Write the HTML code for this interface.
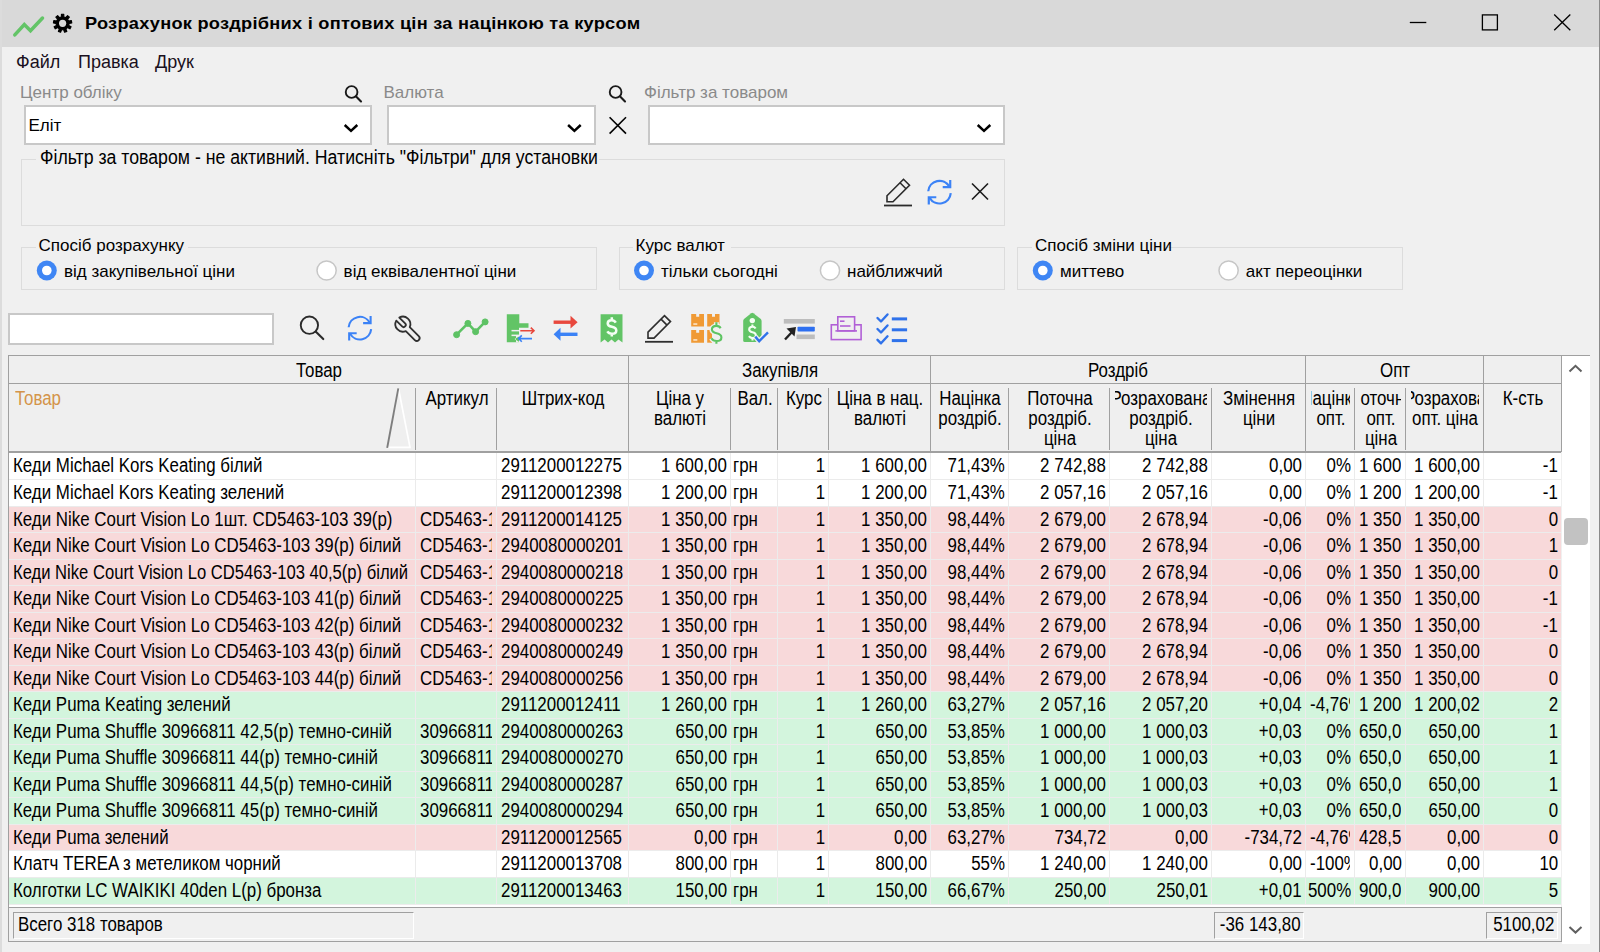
<!DOCTYPE html>
<html><head><meta charset="utf-8"><style>
*{margin:0;padding:0;box-sizing:border-box}
html,body{width:1600px;height:952px;overflow:hidden;background:#f0f0f0;font-family:"Liberation Sans",sans-serif;position:relative}
.a{position:absolute}
.t{position:absolute;white-space:pre}
svg{position:absolute;overflow:visible}
</style></head>
<body>
<div class="a" style="left:0px;top:0px;width:1600px;height:47px;background:#d9d9d9"></div>
<svg style="left:0;top:0" width="80" height="46"><polyline points="14.8,34.9 24.3,24.6 30.5,30.8 42.5,18" fill="none" stroke="#63c467" stroke-width="3.5" stroke-linecap="round" stroke-linejoin="miter"/></svg>
<svg style="left:0;top:0" width="80" height="46"><path d="M61.37,16.92 L61.41,14.18 L63.79,14.18 L63.83,16.92 L65.76,17.62 L67.55,15.55 L69.38,17.08 L67.64,19.20 L68.67,20.98 L71.38,20.54 L71.79,22.89 L69.10,23.40 L68.74,25.43 L71.10,26.83 L69.90,28.89 L67.51,27.55 L65.94,28.88 L66.84,31.46 L64.60,32.28 L63.63,29.72 L61.57,29.72 L60.60,32.28 L58.36,31.46 L59.26,28.88 L57.69,27.55 L55.30,28.89 L54.10,26.83 L56.46,25.43 L56.10,23.40 L53.41,22.89 L53.82,20.54 L56.53,20.98 L57.56,19.20 L55.82,17.08 L57.65,15.55 L59.44,17.62 Z" fill="#000" stroke="#000" stroke-width="1.1" stroke-linejoin="round"/><circle cx="62.6" cy="23.3" r="3.6" fill="#d9d9d9"/></svg>
<div class="t" style="left:84.5px;top:15.11px;font-size:17px;line-height:17px;color:#000;font-weight:bold;letter-spacing:0.25px;transform:scaleX(1.07);transform-origin:0 50%">Розрахунок роздрібних і оптових цін за націнкою та курсом</div>
<svg style="left:1400px;top:0" width="200" height="46"><line x1="9.8" y1="22.5" x2="26.3" y2="22.5" stroke="#000" stroke-width="1.3"/><rect x="82.4" y="14.9" width="15" height="15" fill="none" stroke="#000" stroke-width="1.3"/><line x1="154.2" y1="14.5" x2="170.3" y2="30.2" stroke="#000" stroke-width="1.3"/><line x1="170.3" y1="14.5" x2="154.2" y2="30.2" stroke="#000" stroke-width="1.3"/></svg>
<div class="t" style="left:16px;top:52.76px;font-size:18px;line-height:18px;color:#1a1020;">Файл</div>
<div class="t" style="left:78px;top:52.76px;font-size:18px;line-height:18px;color:#1a1020;">Правка</div>
<div class="t" style="left:155px;top:52.76px;font-size:18px;line-height:18px;color:#1a1020;">Друк</div>
<div class="t" style="left:20px;top:84.11px;font-size:17px;line-height:17px;color:#8a8a8a;">Центр обліку</div>
<div class="t" style="left:383.5px;top:84.11px;font-size:17px;line-height:17px;color:#8a8a8a;">Валюта</div>
<div class="t" style="left:644px;top:84.11px;font-size:17px;line-height:17px;color:#8a8a8a;">Фільтр за товаром</div>
<svg style="left:0;top:0" width="1" height="1"><circle cx="351.6" cy="92" r="5.85" fill="none" stroke="#1a1a1a" stroke-width="1.9"/><line x1="356.10828000000004" y1="96.50828" x2="361.00443000000007" y2="101.40442999999999" stroke="#1a1a1a" stroke-width="2.1" stroke-linecap="round"/></svg>
<svg style="left:0;top:0" width="1" height="1"><circle cx="615.6" cy="92" r="5.85" fill="none" stroke="#1a1a1a" stroke-width="1.9"/><line x1="620.10828" y1="96.50828" x2="625.00443" y2="101.40442999999999" stroke="#1a1a1a" stroke-width="2.1" stroke-linecap="round"/></svg>
<div class="a" style="left:24px;top:105px;width:348px;height:40px;background:#fff;border:2px solid #c8c8c8"></div>
<svg style="left:0;top:0" width="1" height="1"><polyline points="344.7,125 351,130.9 357.3,125" fill="none" stroke="#000" stroke-width="2.5"/></svg>
<div class="t" style="left:28.5px;top:116.61px;font-size:17px;line-height:17px;color:#000;">Еліт</div>
<div class="a" style="left:387px;top:105px;width:209px;height:40px;background:#fff;border:2px solid #c8c8c8"></div>
<svg style="left:0;top:0" width="1" height="1"><polyline points="568.1,125 574.4,130.9 580.6999999999999,125" fill="none" stroke="#000" stroke-width="2.5"/></svg>
<div class="a" style="left:648px;top:105px;width:357px;height:40px;background:#fff;border:2px solid #c8c8c8"></div>
<svg style="left:0;top:0" width="1" height="1"><polyline points="977.7,125 984,130.9 990.3,125" fill="none" stroke="#000" stroke-width="2.5"/></svg>
<svg style="left:0;top:0" width="1" height="1"><line x1="609.6" y1="117.2" x2="626" y2="133.6" stroke="#000" stroke-width="1.6"/><line x1="626" y1="117.2" x2="609.6" y2="133.6" stroke="#000" stroke-width="1.6"/></svg>
<div class="a" style="left:20.5px;top:158.5px;width:984.5px;height:67px;border:1px solid #dcdcdc"></div>
<div class="a" style="left:36px;top:150px;width:563px;height:14px;background:#f0f0f0"></div>
<div class="t" style="left:40px;width:600px;top:144.07px;height:27px;overflow:hidden"><div class="t" style="left:0;top:3px;font-size:20px;line-height:20px;color:#000;transform:scaleX(0.885);transform-origin:0 50%">Фільтр за товаром - не активний. Натисніть &quot;Фільтри&quot; для установки</div></div>
<svg style="left:0;top:0" width="1" height="1"><g transform="translate(884,204.3) scale(1.0)" fill="none" stroke="#2b2b2b" stroke-width="1.6" stroke-linejoin="miter"><path d="M3,-2.5 L3,-8.5 L19.5,-25 L25.5,-19 L9,-2.5 Z"/><line x1="16" y1="-21.5" x2="22" y2="-15.5"/><line x1="0" y1="1.2" x2="28" y2="1.2" stroke-width="1.8"/></g></svg>
<svg style="left:0;top:0" width="1" height="1"><g fill="none" stroke="#3b82f6" stroke-width="2.2"><path d="M928.24,191.22 A11.3,11.3 0 0 1 949.29,186.55"/><path d="M950.76,193.18 A11.3,11.3 0 0 1 929.71,197.85"/><path d="M942.71,187.13 L950.21,187.13 L950.21,179.93"/><path d="M936.29,197.27 L928.79,197.27 L928.79,204.47"/></g></svg>
<svg style="left:0;top:0" width="1" height="1"><line x1="972" y1="183.5" x2="988" y2="199.5" stroke="#1a1a1a" stroke-width="1.6"/><line x1="988" y1="183.5" x2="972" y2="199.5" stroke="#1a1a1a" stroke-width="1.6"/></svg>
<div class="a" style="left:21px;top:246.5px;width:575.5px;height:43.5px;border:1px solid #dcdcdc"></div>
<div class="a" style="left:35.5px;top:238.5px;width:152px;height:14px;background:#f0f0f0"></div>
<div class="t" style="left:38.5px;top:237.36px;font-size:17px;line-height:17px;color:#000;">Спосіб розрахунку</div>
<svg style="left:0;top:0" width="1" height="1"><circle cx="46.8" cy="270.5" r="10" fill="#3f86f4"/><circle cx="46.8" cy="270.5" r="4.8" fill="#fff"/></svg>
<div class="t" style="left:64px;top:262.91px;font-size:17px;line-height:17px;color:#000;">від закупівельної ціни</div>
<svg style="left:0;top:0" width="1" height="1"><circle cx="326.6" cy="270.5" r="9.6" fill="#fff" stroke="#c6c6c6" stroke-width="1.5"/></svg>
<div class="t" style="left:343.6px;top:262.91px;font-size:17px;line-height:17px;color:#000;">від еквівалентної ціни</div>
<div class="a" style="left:618.5px;top:246.5px;width:386.5px;height:43.5px;border:1px solid #dcdcdc"></div>
<div class="a" style="left:632.6px;top:238.5px;width:98px;height:14px;background:#f0f0f0"></div>
<div class="t" style="left:635.6px;top:237.36px;font-size:17px;line-height:17px;color:#000;">Курс валют</div>
<svg style="left:0;top:0" width="1" height="1"><circle cx="644" cy="270.5" r="10" fill="#3f86f4"/><circle cx="644" cy="270.5" r="4.8" fill="#fff"/></svg>
<div class="t" style="left:661px;top:262.91px;font-size:17px;line-height:17px;color:#000;">тільки сьогодні</div>
<svg style="left:0;top:0" width="1" height="1"><circle cx="830" cy="270.5" r="9.6" fill="#fff" stroke="#c6c6c6" stroke-width="1.5"/></svg>
<div class="t" style="left:847px;top:262.91px;font-size:17px;line-height:17px;color:#000;">найближчий</div>
<div class="a" style="left:1017.3px;top:246.5px;width:386.2px;height:43.5px;border:1px solid #dcdcdc"></div>
<div class="a" style="left:1032px;top:238.5px;width:135px;height:14px;background:#f0f0f0"></div>
<div class="t" style="left:1035px;top:237.36px;font-size:17px;line-height:17px;color:#000;">Спосіб зміни ціни</div>
<svg style="left:0;top:0" width="1" height="1"><circle cx="1042.8" cy="270.5" r="10" fill="#3f86f4"/><circle cx="1042.8" cy="270.5" r="4.8" fill="#fff"/></svg>
<div class="t" style="left:1060px;top:262.91px;font-size:17px;line-height:17px;color:#000;">миттево</div>
<svg style="left:0;top:0" width="1" height="1"><circle cx="1228.6" cy="270.5" r="9.6" fill="#fff" stroke="#c6c6c6" stroke-width="1.5"/></svg>
<div class="t" style="left:1245.8px;top:262.91px;font-size:17px;line-height:17px;color:#000;">акт переоцінки</div>
<div class="a" style="left:8px;top:313px;width:266px;height:32px;background:#fff;border:2px solid #c8c8c8"></div>
<svg style="left:0;top:0" width="1" height="1"><circle cx="309.4" cy="325.2" r="8.65" fill="none" stroke="#2a2a2a" stroke-width="1.9"/><line x1="315.88815999999997" y1="331.68816" x2="323.25916" y2="339.05916" stroke="#2a2a2a" stroke-width="2.1" stroke-linecap="round"/></svg>
<svg style="left:0;top:0" width="1" height="1"><g fill="none" stroke="#3b82f6" stroke-width="2.1"><path d="M348.64,327.22 A11.3,11.3 0 0 1 369.69,322.55"/><path d="M371.16,329.18 A11.3,11.3 0 0 1 350.11,333.85"/><path d="M363.11,323.13 L370.61,323.13 L370.61,315.93"/><path d="M356.69,333.27 L349.19,333.27 L349.19,340.47"/></g></svg>
<svg style="left:0;top:0" width="1" height="1"><g transform="translate(394.3,315.6) scale(1.07)" fill="none" stroke="#303030" stroke-width="1.7" stroke-linejoin="round"><path d="M14.44,10.76 L22.84,19.16 A2.6,2.6 0 0 1 19.16,22.84 L10.76,14.44 A7,7 0 0 1 1.84,4.67 L7.29,10.12 A2,2 0 0 0 10.12,7.29 L4.67,1.84 A7,7 0 0 1 14.44,10.76 Z"/></g></svg>
<svg style="left:0;top:0" width="1" height="1"><g fill="#5dc264" stroke="#5dc264"><polyline points="456.6,334.7 467.9,323.4 475.6,331.7 485.1,321.9" fill="none" stroke-width="2.6"/><circle cx="456.6" cy="334.7" r="3"/><circle cx="467.9" cy="323.4" r="3"/><circle cx="475.6" cy="331.7" r="3"/><circle cx="485.1" cy="321.9" r="3"/></g></svg>
<svg style="left:0;top:0" width="1" height="1"><g><path d="M506.8,314.2 L519.3,314.2 L519.3,323.2 L528.5,323.2 L528.5,327.8 L519,327.8 L519,342.3 L506.8,342.3 Z" fill="#62c466"/><rect x="511.5" y="329.9" width="8" height="1.5" fill="#f0f0f0"/><rect x="511.5" y="334.6" width="8" height="1.5" fill="#f0f0f0"/><path d="M516,336.1 L520,336.1 L514.5,339 L520,342.5 L516,342.5 Z" fill="#f0f0f0"/><path d="M520.3,330.7 L534,330.7 M530.8,327.6 L534,330.7 L530.8,333.8" fill="none" stroke="#e8483d" stroke-width="1.6"/><path d="M518.6,338.6 L532,338.6 M521.8,335.4 L518.6,338.6 L521.8,341.8" fill="none" stroke="#3b82f6" stroke-width="1.6"/></g></svg>
<svg style="left:0;top:0" width="1" height="1"><g><rect x="553.6" y="320.5" width="18" height="3.4" fill="#e8483d"/><path d="M570.5,315.8 L577.6,322.2 L570.5,328.5 Z" fill="#e8483d"/><rect x="559" y="332.6" width="18.5" height="3.4" fill="#3b82f6"/><path d="M560.5,327.8 L553.6,334.3 L560.5,340.7 Z" fill="#3b82f6"/></g></svg>
<svg style="left:0;top:0" width="1" height="1"><g><path d="M600.6,314.3 L622.5,314.3 L622.5,342.5 L618.5,339.6 L615,342.5 L611.5,339.6 L608,342.5 L604.6,339.6 L600.6,342.5 Z" fill="#62c466"/><path d="M615.8,322.6 C614.8,320.9 613.4,320.2 611.7,320.2 C609.4,320.2 607.7,321.5 607.7,323.4 C607.7,325.6 609.7,326.3 611.9,326.8 C614.3,327.3 616.3,328.2 616.3,330.5 C616.3,332.6 614.4,333.8 611.9,333.8 C609.9,333.8 608.3,333 607.3,331.4 M611.8,317.2 L611.8,320.2 M611.8,333.8 L611.8,336.4" fill="none" stroke="#f4fff4" stroke-width="2.5"/></g></svg>
<svg style="left:0;top:0" width="1" height="1"><g transform="translate(645.0,340.6) scale(1.0)" fill="none" stroke="#2e2e2e" stroke-width="1.6" stroke-linejoin="miter"><path d="M3,-2.5 L3,-8.5 L19.5,-25 L25.5,-19 L9,-2.5 Z"/><line x1="16" y1="-21.5" x2="22" y2="-15.5"/><line x1="0" y1="1.2" x2="28" y2="1.2" stroke-width="1.8"/></g></svg>
<svg style="left:0;top:0" width="1" height="1"><g fill="#f09a35"><path d="M691.2,314 L696.2,314 L696.2,316.8 L699.2,316.8 L699.2,314 L704,314 L704,326.4 L691.2,326.4 Z"/><path d="M707.2,314 L712,314 L712,316.8 L715,316.8 L715,314 L719.5,314 L719.5,326.4 L707.2,326.4 Z"/><path d="M691.2,330 L696.2,330 L696.2,332.8 L699.2,332.8 L699.2,330 L704,330 L704,342.7 L691.2,342.7 Z"/><path d="M707.2,330 L712,330 L712,342.7 L707.2,342.7 Z"/></g><g fill="#fff5e8"><rect x="693.3" y="323.4" width="4" height="1.3"/><rect x="693.3" y="339.3" width="4" height="1.3"/></g><path d="M720.6,328.2 C719.8,326.6 718.4,325.9 716.4,325.9 C713.8,325.9 711.9,327.4 711.9,329.6 C711.9,332.2 714.4,332.8 716.6,333.3 C719.2,333.9 721.4,334.8 721.4,337.4 C721.4,339.8 719.3,341 716.6,341 C714.3,341 712.5,340.1 711.4,338.3 M716.4,322.3 L716.4,325.9 M716.4,341 L716.4,343.8" fill="none" stroke="#f0f0f0" stroke-width="5"/><path d="M720.6,328.2 C719.8,326.6 718.4,325.9 716.4,325.9 C713.8,325.9 711.9,327.4 711.9,329.6 C711.9,332.2 714.4,332.8 716.6,333.3 C719.2,333.9 721.4,334.8 721.4,337.4 C721.4,339.8 719.3,341 716.6,341 C714.3,341 712.5,340.1 711.4,338.3 M716.4,322.3 L716.4,325.9 M716.4,341 L716.4,343.8" fill="none" stroke="#5ec462" stroke-width="2.1"/></svg>
<svg style="left:0;top:0" width="1" height="1"><path d="M751.2,313.2 Q752.3,312.4 753.4,313.2 L760.8,319 Q761.6,319.8 761.6,321 L761.6,340.6 Q761.6,342.1 760.1,342.1 L744.7,342.1 Q743.2,342.1 743.2,340.6 L743.2,321 Q743.2,319.8 744,319 Z" fill="#62c466"/><circle cx="752.3" cy="320.6" r="2.7" fill="#f4fff4"/><path d="M755.6,328.6 C754.9,327.3 753.8,326.8 752.4,326.8 C750.5,326.8 749.2,327.9 749.2,329.5 C749.2,331.4 750.9,331.9 752.5,332.3 C754.4,332.7 755.9,333.5 755.9,335.4 C755.9,337.1 754.5,338.1 752.5,338.1 C750.9,338.1 749.7,337.4 748.9,336.2 M752.4,324.6 L752.4,326.8 M752.5,338.1 L752.5,340.6" fill="none" stroke="#f4fff4" stroke-width="2.1"/><path d="M755.3,336.6 L759.2,341.2 L768,332.3" fill="none" stroke="#f0f0f0" stroke-width="5"/><path d="M755.3,336.6 L759.2,341.2 L768,332.3" fill="none" stroke="#2f72ea" stroke-width="2.4"/></svg>
<svg style="left:0;top:0" width="1" height="1"><rect x="783.8" y="319" width="31" height="4.6" fill="#bdbdbd"/><rect x="797.5" y="326.7" width="17.3" height="4.8" rx="0.8" fill="#2d6ff0"/><rect x="796.5" y="334.5" width="18.3" height="4.6" fill="#bdbdbd"/><line x1="785" y1="339.5" x2="792" y2="332" stroke="#222" stroke-width="2.4"/><path d="M796,327 L786.5,328.5 L794.5,336.5 Z" fill="#222"/></svg>
<svg style="left:0;top:0" width="1" height="1"><g fill="none" stroke="#b160d6" stroke-width="1.6"><rect x="831.3" y="324.8" width="29.8" height="14.8"/><rect x="837.8" y="316.8" width="16.8" height="14" fill="#f0f0f0"/><line x1="835.4" y1="330.9" x2="857" y2="330.9"/><line x1="840" y1="321.2" x2="844.5" y2="321.2"/><line x1="840" y1="326" x2="850.5" y2="326"/></g></svg>
<svg style="left:0;top:0" width="1" height="1"><g fill="none" stroke="#2f72ea" stroke-width="2.4" stroke-linecap="round" stroke-linejoin="round"><polyline points="877.5,318 881,321.5 887.5,314.5"/><polyline points="877.5,329 881,332.5 887.5,325.5"/><polyline points="877.5,339.8 881,343.3 887.5,336.3"/></g><g fill="#2f72ea"><rect x="891.8" y="317.4" width="15.3" height="3"/><rect x="891.8" y="328.3" width="15.3" height="3"/><rect x="891.8" y="339.1" width="15.3" height="3"/></g></svg>
<div class="a" style="left:8px;top:355px;width:1582px;height:1px;background:#a0a0a0"></div>
<div class="a" style="left:8px;top:355px;width:1px;height:587px;background:#a0a0a0"></div>
<div class="a" style="left:9px;top:356px;width:1552px;height:96px;background:#efefef"></div>
<div class="a" style="left:9px;top:383px;width:1552px;height:1px;background:#a0a0a0"></div>
<div class="a" style="left:9px;top:451px;width:1552px;height:2px;background:#a0a0a0"></div>
<div class="a" style="left:1561px;top:355px;width:1px;height:97px;background:#a0a0a0"></div>
<div class="a" style="left:628px;top:356px;width:1px;height:96px;background:#a0a0a0"></div>
<div class="a" style="left:930px;top:356px;width:1px;height:96px;background:#a0a0a0"></div>
<div class="a" style="left:1305px;top:356px;width:1px;height:96px;background:#a0a0a0"></div>
<div class="a" style="left:1483px;top:356px;width:1px;height:96px;background:#a0a0a0"></div>
<div class="a" style="left:415px;top:388px;width:1px;height:62px;background:#a0a0a0"></div>
<div class="a" style="left:496px;top:388px;width:1px;height:62px;background:#a0a0a0"></div>
<div class="a" style="left:730px;top:388px;width:1px;height:62px;background:#a0a0a0"></div>
<div class="a" style="left:777px;top:388px;width:1px;height:62px;background:#a0a0a0"></div>
<div class="a" style="left:828px;top:388px;width:1px;height:62px;background:#a0a0a0"></div>
<div class="a" style="left:1008px;top:388px;width:1px;height:62px;background:#a0a0a0"></div>
<div class="a" style="left:1109px;top:388px;width:1px;height:62px;background:#a0a0a0"></div>
<div class="a" style="left:1211px;top:388px;width:1px;height:62px;background:#a0a0a0"></div>
<div class="a" style="left:1354px;top:388px;width:1px;height:62px;background:#a0a0a0"></div>
<div class="a" style="left:1405px;top:388px;width:1px;height:62px;background:#a0a0a0"></div>
<div class="t" style="left:9px;width:619px;top:356.57px;height:27px;overflow:hidden"><div class="t" style="left:50%;top:3px;font-size:20px;line-height:20px;color:#000;transform:scaleX(0.845) translateX(-50%);transform-origin:0 50%">Товар</div></div>
<div class="t" style="left:629px;width:301px;top:356.57px;height:27px;overflow:hidden"><div class="t" style="left:50%;top:3px;font-size:20px;line-height:20px;color:#000;transform:scaleX(0.845) translateX(-50%);transform-origin:0 50%">Закупівля</div></div>
<div class="t" style="left:931px;width:374px;top:356.57px;height:27px;overflow:hidden"><div class="t" style="left:50%;top:3px;font-size:20px;line-height:20px;color:#000;transform:scaleX(0.845) translateX(-50%);transform-origin:0 50%">Роздріб</div></div>
<div class="t" style="left:1306px;width:177px;top:356.57px;height:27px;overflow:hidden"><div class="t" style="left:50%;top:3px;font-size:20px;line-height:20px;color:#000;transform:scaleX(0.845) translateX(-50%);transform-origin:0 50%">Опт</div></div>
<div class="t" style="left:15px;width:285px;top:384.87px;height:27px;overflow:hidden"><div class="t" style="left:0;top:3px;font-size:20px;line-height:20px;color:#d4944a;transform:scaleX(0.845);transform-origin:0 50%">Товар</div></div>
<svg style="left:0;top:0" width="1" height="1"><path d="M398.5,388.5 L410,447.3 L387.5,447.3" stroke="#ffffff" stroke-width="1.7" fill="none"/><path d="M387.2,447.8 L398.3,388.3" stroke="#7e7e7e" stroke-width="1.9" fill="none"/></svg>
<div class="t" style="left:421px;width:71px;top:384.87px;height:27px;overflow:hidden"><div class="t" style="left:50%;top:3px;font-size:20px;line-height:20px;color:#000;transform:scaleX(0.845) translateX(-50%);transform-origin:0 50%">Артикул</div></div>
<div class="t" style="left:502px;width:122px;top:384.87px;height:27px;overflow:hidden"><div class="t" style="left:50%;top:3px;font-size:20px;line-height:20px;color:#000;transform:scaleX(0.845) translateX(-50%);transform-origin:0 50%">Штрих-код</div></div>
<div class="t" style="left:634px;width:92px;top:384.87px;height:27px;overflow:hidden"><div class="t" style="left:50%;top:3px;font-size:20px;line-height:20px;color:#000;transform:scaleX(0.845) translateX(-50%);transform-origin:0 50%">Ціна у</div></div>
<div class="t" style="left:634px;width:92px;top:404.87px;height:27px;overflow:hidden"><div class="t" style="left:50%;top:3px;font-size:20px;line-height:20px;color:#000;transform:scaleX(0.845) translateX(-50%);transform-origin:0 50%">валюті</div></div>
<div class="t" style="left:736px;width:37px;top:384.87px;height:27px;overflow:hidden"><div class="t" style="left:50%;top:3px;font-size:20px;line-height:20px;color:#000;transform:scaleX(0.845) translateX(-50%);transform-origin:0 50%">Вал.</div></div>
<div class="t" style="left:783px;width:41px;top:384.87px;height:27px;overflow:hidden"><div class="t" style="left:50%;top:3px;font-size:20px;line-height:20px;color:#000;transform:scaleX(0.845) translateX(-50%);transform-origin:0 50%">Курс</div></div>
<div class="t" style="left:834px;width:92px;top:384.87px;height:27px;overflow:hidden"><div class="t" style="left:50%;top:3px;font-size:20px;line-height:20px;color:#000;transform:scaleX(0.845) translateX(-50%);transform-origin:0 50%">Ціна в нац.</div></div>
<div class="t" style="left:834px;width:92px;top:404.87px;height:27px;overflow:hidden"><div class="t" style="left:50%;top:3px;font-size:20px;line-height:20px;color:#000;transform:scaleX(0.845) translateX(-50%);transform-origin:0 50%">валюті</div></div>
<div class="t" style="left:936px;width:68px;top:384.87px;height:27px;overflow:hidden"><div class="t" style="left:50%;top:3px;font-size:20px;line-height:20px;color:#000;transform:scaleX(0.845) translateX(-50%);transform-origin:0 50%">Націнка</div></div>
<div class="t" style="left:936px;width:68px;top:404.87px;height:27px;overflow:hidden"><div class="t" style="left:50%;top:3px;font-size:20px;line-height:20px;color:#000;transform:scaleX(0.845) translateX(-50%);transform-origin:0 50%">роздріб.</div></div>
<div class="t" style="left:1014px;width:91px;top:384.87px;height:27px;overflow:hidden"><div class="t" style="left:50%;top:3px;font-size:20px;line-height:20px;color:#000;transform:scaleX(0.845) translateX(-50%);transform-origin:0 50%">Поточна</div></div>
<div class="t" style="left:1014px;width:91px;top:404.87px;height:27px;overflow:hidden"><div class="t" style="left:50%;top:3px;font-size:20px;line-height:20px;color:#000;transform:scaleX(0.845) translateX(-50%);transform-origin:0 50%">роздріб.</div></div>
<div class="t" style="left:1014px;width:91px;top:424.87px;height:27px;overflow:hidden"><div class="t" style="left:50%;top:3px;font-size:20px;line-height:20px;color:#000;transform:scaleX(0.845) translateX(-50%);transform-origin:0 50%">ціна</div></div>
<div class="t" style="left:1115px;width:92px;top:384.87px;height:27px;overflow:hidden"><div class="t" style="left:50%;top:3px;font-size:20px;line-height:20px;color:#000;transform:scaleX(0.845) translateX(-50%);transform-origin:0 50%">Розрахована</div></div>
<div class="t" style="left:1115px;width:92px;top:404.87px;height:27px;overflow:hidden"><div class="t" style="left:50%;top:3px;font-size:20px;line-height:20px;color:#000;transform:scaleX(0.845) translateX(-50%);transform-origin:0 50%">роздріб.</div></div>
<div class="t" style="left:1115px;width:92px;top:424.87px;height:27px;overflow:hidden"><div class="t" style="left:50%;top:3px;font-size:20px;line-height:20px;color:#000;transform:scaleX(0.845) translateX(-50%);transform-origin:0 50%">ціна</div></div>
<div class="t" style="left:1217px;width:84px;top:384.87px;height:27px;overflow:hidden"><div class="t" style="left:50%;top:3px;font-size:20px;line-height:20px;color:#000;transform:scaleX(0.845) translateX(-50%);transform-origin:0 50%">Змінення</div></div>
<div class="t" style="left:1217px;width:84px;top:404.87px;height:27px;overflow:hidden"><div class="t" style="left:50%;top:3px;font-size:20px;line-height:20px;color:#000;transform:scaleX(0.845) translateX(-50%);transform-origin:0 50%">ціни</div></div>
<div class="t" style="left:1311px;width:39px;top:384.87px;height:27px;overflow:hidden"><div class="t" style="left:50%;top:3px;font-size:20px;line-height:20px;color:#000;transform:scaleX(0.845) translateX(-50%);transform-origin:0 50%">Націнка</div></div>
<div class="t" style="left:1311px;width:39px;top:404.87px;height:27px;overflow:hidden"><div class="t" style="left:50%;top:3px;font-size:20px;line-height:20px;color:#000;transform:scaleX(0.845) translateX(-50%);transform-origin:0 50%">опт.</div></div>
<div class="t" style="left:1360px;width:41px;top:384.87px;height:27px;overflow:hidden"><div class="t" style="left:50%;top:3px;font-size:20px;line-height:20px;color:#000;transform:scaleX(0.845) translateX(-50%);transform-origin:0 50%">Поточна</div></div>
<div class="t" style="left:1360px;width:41px;top:404.87px;height:27px;overflow:hidden"><div class="t" style="left:50%;top:3px;font-size:20px;line-height:20px;color:#000;transform:scaleX(0.845) translateX(-50%);transform-origin:0 50%">опт.</div></div>
<div class="t" style="left:1360px;width:41px;top:424.87px;height:27px;overflow:hidden"><div class="t" style="left:50%;top:3px;font-size:20px;line-height:20px;color:#000;transform:scaleX(0.845) translateX(-50%);transform-origin:0 50%">ціна</div></div>
<div class="t" style="left:1411px;width:68px;top:384.87px;height:27px;overflow:hidden"><div class="t" style="left:50%;top:3px;font-size:20px;line-height:20px;color:#000;transform:scaleX(0.845) translateX(-50%);transform-origin:0 50%">Розрахова</div></div>
<div class="t" style="left:1411px;width:68px;top:404.87px;height:27px;overflow:hidden"><div class="t" style="left:50%;top:3px;font-size:20px;line-height:20px;color:#000;transform:scaleX(0.845) translateX(-50%);transform-origin:0 50%">опт. ціна</div></div>
<div class="t" style="left:1489px;width:68px;top:384.87px;height:27px;overflow:hidden"><div class="t" style="left:50%;top:3px;font-size:20px;line-height:20px;color:#000;transform:scaleX(0.845) translateX(-50%);transform-origin:0 50%">К-сть</div></div>
<div class="a" style="left:9px;top:453px;width:1552px;height:27px;background:#ffffff"></div>
<div class="a" style="left:9px;top:479px;width:1552px;height:1px;background:#ebebeb"></div>
<div class="a" style="left:415px;top:453px;width:1px;height:27px;background:#ebebeb"></div>
<div class="t" style="left:12.5px;width:398.5px;top:452.07px;height:27px;overflow:hidden"><div class="t" style="left:0;top:3px;font-size:20px;line-height:20px;color:#000;transform:scaleX(0.845);transform-origin:0 50%">Кеди Michael Kors Keating білий</div></div>
<div class="a" style="left:496px;top:453px;width:1px;height:27px;background:#ebebeb"></div>
<div class="a" style="left:628px;top:453px;width:1px;height:27px;background:#ebebeb"></div>
<div class="t" style="left:500.5px;width:122.0px;top:452.07px;height:27px;overflow:hidden"><div class="t" style="left:0;top:3px;font-size:20px;line-height:20px;color:#000;transform:scaleX(0.845);transform-origin:0 50%">2911200012275</div></div>
<div class="a" style="left:730px;top:453px;width:1px;height:27px;background:#ebebeb"></div>
<div class="t" style="left:631px;width:96px;top:452.07px;height:27px;overflow:hidden"><div class="t" style="right:0;top:3px;font-size:20px;line-height:20px;color:#000;transform:scaleX(0.845);transform-origin:100% 50%">1 600,00</div></div>
<div class="a" style="left:777px;top:453px;width:1px;height:27px;background:#ebebeb"></div>
<div class="t" style="left:733px;width:38.5px;top:452.07px;height:27px;overflow:hidden"><div class="t" style="left:0;top:3px;font-size:20px;line-height:20px;color:#000;transform:scaleX(0.845);transform-origin:0 50%">грн</div></div>
<div class="a" style="left:828px;top:453px;width:1px;height:27px;background:#ebebeb"></div>
<div class="t" style="left:780px;width:45px;top:452.07px;height:27px;overflow:hidden"><div class="t" style="right:0;top:3px;font-size:20px;line-height:20px;color:#000;transform:scaleX(0.845);transform-origin:100% 50%">1</div></div>
<div class="a" style="left:930px;top:453px;width:1px;height:27px;background:#ebebeb"></div>
<div class="t" style="left:831px;width:96px;top:452.07px;height:27px;overflow:hidden"><div class="t" style="right:0;top:3px;font-size:20px;line-height:20px;color:#000;transform:scaleX(0.845);transform-origin:100% 50%">1 600,00</div></div>
<div class="a" style="left:1008px;top:453px;width:1px;height:27px;background:#ebebeb"></div>
<div class="t" style="left:933px;width:72px;top:452.07px;height:27px;overflow:hidden"><div class="t" style="right:0;top:3px;font-size:20px;line-height:20px;color:#000;transform:scaleX(0.845);transform-origin:100% 50%">71,43%</div></div>
<div class="a" style="left:1109px;top:453px;width:1px;height:27px;background:#ebebeb"></div>
<div class="t" style="left:1011px;width:95px;top:452.07px;height:27px;overflow:hidden"><div class="t" style="right:0;top:3px;font-size:20px;line-height:20px;color:#000;transform:scaleX(0.845);transform-origin:100% 50%">2 742,88</div></div>
<div class="a" style="left:1211px;top:453px;width:1px;height:27px;background:#ebebeb"></div>
<div class="t" style="left:1112px;width:96px;top:452.07px;height:27px;overflow:hidden"><div class="t" style="right:0;top:3px;font-size:20px;line-height:20px;color:#000;transform:scaleX(0.845);transform-origin:100% 50%">2 742,88</div></div>
<div class="a" style="left:1305px;top:453px;width:1px;height:27px;background:#ebebeb"></div>
<div class="t" style="left:1214px;width:88px;top:452.07px;height:27px;overflow:hidden"><div class="t" style="right:0;top:3px;font-size:20px;line-height:20px;color:#000;transform:scaleX(0.845);transform-origin:100% 50%">0,00</div></div>
<div class="a" style="left:1354px;top:453px;width:1px;height:27px;background:#ebebeb"></div>
<div class="t" style="left:1308px;width:43px;top:452.07px;height:27px;overflow:hidden"><div class="t" style="right:0;top:3px;font-size:20px;line-height:20px;color:#000;transform:scaleX(0.845);transform-origin:100% 50%">0%</div></div>
<div class="a" style="left:1405px;top:453px;width:1px;height:27px;background:#ebebeb"></div>
<div class="t" style="left:1358.5px;width:42.5px;top:452.07px;height:27px;overflow:hidden"><div class="t" style="left:0;top:3px;font-size:20px;line-height:20px;color:#000;transform:scaleX(0.845);transform-origin:0 50%">1 600,00</div></div>
<div class="a" style="left:1483px;top:453px;width:1px;height:27px;background:#ebebeb"></div>
<div class="t" style="left:1408px;width:72px;top:452.07px;height:27px;overflow:hidden"><div class="t" style="right:0;top:3px;font-size:20px;line-height:20px;color:#000;transform:scaleX(0.845);transform-origin:100% 50%">1 600,00</div></div>
<div class="t" style="left:1486px;width:72px;top:452.07px;height:27px;overflow:hidden"><div class="t" style="right:0;top:3px;font-size:20px;line-height:20px;color:#000;transform:scaleX(0.845);transform-origin:100% 50%">-1</div></div>
<div class="a" style="left:9px;top:480px;width:1552px;height:27px;background:#ffffff"></div>
<div class="a" style="left:9px;top:506px;width:1552px;height:1px;background:#ebebeb"></div>
<div class="a" style="left:415px;top:480px;width:1px;height:27px;background:#ebebeb"></div>
<div class="t" style="left:12.5px;width:398.5px;top:479.07px;height:27px;overflow:hidden"><div class="t" style="left:0;top:3px;font-size:20px;line-height:20px;color:#000;transform:scaleX(0.845);transform-origin:0 50%">Кеди Michael Kors Keating зелений</div></div>
<div class="a" style="left:496px;top:480px;width:1px;height:27px;background:#ebebeb"></div>
<div class="a" style="left:628px;top:480px;width:1px;height:27px;background:#ebebeb"></div>
<div class="t" style="left:500.5px;width:122.0px;top:479.07px;height:27px;overflow:hidden"><div class="t" style="left:0;top:3px;font-size:20px;line-height:20px;color:#000;transform:scaleX(0.845);transform-origin:0 50%">2911200012398</div></div>
<div class="a" style="left:730px;top:480px;width:1px;height:27px;background:#ebebeb"></div>
<div class="t" style="left:631px;width:96px;top:479.07px;height:27px;overflow:hidden"><div class="t" style="right:0;top:3px;font-size:20px;line-height:20px;color:#000;transform:scaleX(0.845);transform-origin:100% 50%">1 200,00</div></div>
<div class="a" style="left:777px;top:480px;width:1px;height:27px;background:#ebebeb"></div>
<div class="t" style="left:733px;width:38.5px;top:479.07px;height:27px;overflow:hidden"><div class="t" style="left:0;top:3px;font-size:20px;line-height:20px;color:#000;transform:scaleX(0.845);transform-origin:0 50%">грн</div></div>
<div class="a" style="left:828px;top:480px;width:1px;height:27px;background:#ebebeb"></div>
<div class="t" style="left:780px;width:45px;top:479.07px;height:27px;overflow:hidden"><div class="t" style="right:0;top:3px;font-size:20px;line-height:20px;color:#000;transform:scaleX(0.845);transform-origin:100% 50%">1</div></div>
<div class="a" style="left:930px;top:480px;width:1px;height:27px;background:#ebebeb"></div>
<div class="t" style="left:831px;width:96px;top:479.07px;height:27px;overflow:hidden"><div class="t" style="right:0;top:3px;font-size:20px;line-height:20px;color:#000;transform:scaleX(0.845);transform-origin:100% 50%">1 200,00</div></div>
<div class="a" style="left:1008px;top:480px;width:1px;height:27px;background:#ebebeb"></div>
<div class="t" style="left:933px;width:72px;top:479.07px;height:27px;overflow:hidden"><div class="t" style="right:0;top:3px;font-size:20px;line-height:20px;color:#000;transform:scaleX(0.845);transform-origin:100% 50%">71,43%</div></div>
<div class="a" style="left:1109px;top:480px;width:1px;height:27px;background:#ebebeb"></div>
<div class="t" style="left:1011px;width:95px;top:479.07px;height:27px;overflow:hidden"><div class="t" style="right:0;top:3px;font-size:20px;line-height:20px;color:#000;transform:scaleX(0.845);transform-origin:100% 50%">2 057,16</div></div>
<div class="a" style="left:1211px;top:480px;width:1px;height:27px;background:#ebebeb"></div>
<div class="t" style="left:1112px;width:96px;top:479.07px;height:27px;overflow:hidden"><div class="t" style="right:0;top:3px;font-size:20px;line-height:20px;color:#000;transform:scaleX(0.845);transform-origin:100% 50%">2 057,16</div></div>
<div class="a" style="left:1305px;top:480px;width:1px;height:27px;background:#ebebeb"></div>
<div class="t" style="left:1214px;width:88px;top:479.07px;height:27px;overflow:hidden"><div class="t" style="right:0;top:3px;font-size:20px;line-height:20px;color:#000;transform:scaleX(0.845);transform-origin:100% 50%">0,00</div></div>
<div class="a" style="left:1354px;top:480px;width:1px;height:27px;background:#ebebeb"></div>
<div class="t" style="left:1308px;width:43px;top:479.07px;height:27px;overflow:hidden"><div class="t" style="right:0;top:3px;font-size:20px;line-height:20px;color:#000;transform:scaleX(0.845);transform-origin:100% 50%">0%</div></div>
<div class="a" style="left:1405px;top:480px;width:1px;height:27px;background:#ebebeb"></div>
<div class="t" style="left:1358.5px;width:42.5px;top:479.07px;height:27px;overflow:hidden"><div class="t" style="left:0;top:3px;font-size:20px;line-height:20px;color:#000;transform:scaleX(0.845);transform-origin:0 50%">1 200,00</div></div>
<div class="a" style="left:1483px;top:480px;width:1px;height:27px;background:#ebebeb"></div>
<div class="t" style="left:1408px;width:72px;top:479.07px;height:27px;overflow:hidden"><div class="t" style="right:0;top:3px;font-size:20px;line-height:20px;color:#000;transform:scaleX(0.845);transform-origin:100% 50%">1 200,00</div></div>
<div class="t" style="left:1486px;width:72px;top:479.07px;height:27px;overflow:hidden"><div class="t" style="right:0;top:3px;font-size:20px;line-height:20px;color:#000;transform:scaleX(0.845);transform-origin:100% 50%">-1</div></div>
<div class="a" style="left:9px;top:507px;width:1552px;height:26px;background:#f8d9da"></div>
<div class="a" style="left:9px;top:532px;width:1552px;height:1px;background:#ececec"></div>
<div class="a" style="left:415px;top:507px;width:1px;height:26px;background:#ececec"></div>
<div class="t" style="left:12.5px;width:398.5px;top:506.07px;height:27px;overflow:hidden"><div class="t" style="left:0;top:3px;font-size:20px;line-height:20px;color:#000;transform:scaleX(0.845);transform-origin:0 50%">Кеди Nike Court Vision Lo 1шт. CD5463-103 39(р)</div></div>
<div class="a" style="left:496px;top:507px;width:1px;height:26px;background:#ececec"></div>
<div class="t" style="left:419.5px;width:72.5px;top:506.07px;height:27px;overflow:hidden"><div class="t" style="left:0;top:3px;font-size:20px;line-height:20px;color:#000;transform:scaleX(0.845);transform-origin:0 50%">CD5463-103</div></div>
<div class="a" style="left:628px;top:507px;width:1px;height:26px;background:#ececec"></div>
<div class="t" style="left:500.5px;width:122.0px;top:506.07px;height:27px;overflow:hidden"><div class="t" style="left:0;top:3px;font-size:20px;line-height:20px;color:#000;transform:scaleX(0.845);transform-origin:0 50%">2911200014125</div></div>
<div class="a" style="left:730px;top:507px;width:1px;height:26px;background:#ececec"></div>
<div class="t" style="left:631px;width:96px;top:506.07px;height:27px;overflow:hidden"><div class="t" style="right:0;top:3px;font-size:20px;line-height:20px;color:#000;transform:scaleX(0.845);transform-origin:100% 50%">1 350,00</div></div>
<div class="a" style="left:777px;top:507px;width:1px;height:26px;background:#ececec"></div>
<div class="t" style="left:733px;width:38.5px;top:506.07px;height:27px;overflow:hidden"><div class="t" style="left:0;top:3px;font-size:20px;line-height:20px;color:#000;transform:scaleX(0.845);transform-origin:0 50%">грн</div></div>
<div class="a" style="left:828px;top:507px;width:1px;height:26px;background:#ececec"></div>
<div class="t" style="left:780px;width:45px;top:506.07px;height:27px;overflow:hidden"><div class="t" style="right:0;top:3px;font-size:20px;line-height:20px;color:#000;transform:scaleX(0.845);transform-origin:100% 50%">1</div></div>
<div class="a" style="left:930px;top:507px;width:1px;height:26px;background:#ececec"></div>
<div class="t" style="left:831px;width:96px;top:506.07px;height:27px;overflow:hidden"><div class="t" style="right:0;top:3px;font-size:20px;line-height:20px;color:#000;transform:scaleX(0.845);transform-origin:100% 50%">1 350,00</div></div>
<div class="a" style="left:1008px;top:507px;width:1px;height:26px;background:#ececec"></div>
<div class="t" style="left:933px;width:72px;top:506.07px;height:27px;overflow:hidden"><div class="t" style="right:0;top:3px;font-size:20px;line-height:20px;color:#000;transform:scaleX(0.845);transform-origin:100% 50%">98,44%</div></div>
<div class="a" style="left:1109px;top:507px;width:1px;height:26px;background:#ececec"></div>
<div class="t" style="left:1011px;width:95px;top:506.07px;height:27px;overflow:hidden"><div class="t" style="right:0;top:3px;font-size:20px;line-height:20px;color:#000;transform:scaleX(0.845);transform-origin:100% 50%">2 679,00</div></div>
<div class="a" style="left:1211px;top:507px;width:1px;height:26px;background:#ececec"></div>
<div class="t" style="left:1112px;width:96px;top:506.07px;height:27px;overflow:hidden"><div class="t" style="right:0;top:3px;font-size:20px;line-height:20px;color:#000;transform:scaleX(0.845);transform-origin:100% 50%">2 678,94</div></div>
<div class="a" style="left:1305px;top:507px;width:1px;height:26px;background:#ececec"></div>
<div class="t" style="left:1214px;width:88px;top:506.07px;height:27px;overflow:hidden"><div class="t" style="right:0;top:3px;font-size:20px;line-height:20px;color:#000;transform:scaleX(0.845);transform-origin:100% 50%">-0,06</div></div>
<div class="a" style="left:1354px;top:507px;width:1px;height:26px;background:#ececec"></div>
<div class="t" style="left:1308px;width:43px;top:506.07px;height:27px;overflow:hidden"><div class="t" style="right:0;top:3px;font-size:20px;line-height:20px;color:#000;transform:scaleX(0.845);transform-origin:100% 50%">0%</div></div>
<div class="a" style="left:1405px;top:507px;width:1px;height:26px;background:#ececec"></div>
<div class="t" style="left:1358.5px;width:42.5px;top:506.07px;height:27px;overflow:hidden"><div class="t" style="left:0;top:3px;font-size:20px;line-height:20px;color:#000;transform:scaleX(0.845);transform-origin:0 50%">1 350,00</div></div>
<div class="a" style="left:1483px;top:507px;width:1px;height:26px;background:#ececec"></div>
<div class="t" style="left:1408px;width:72px;top:506.07px;height:27px;overflow:hidden"><div class="t" style="right:0;top:3px;font-size:20px;line-height:20px;color:#000;transform:scaleX(0.845);transform-origin:100% 50%">1 350,00</div></div>
<div class="t" style="left:1486px;width:72px;top:506.07px;height:27px;overflow:hidden"><div class="t" style="right:0;top:3px;font-size:20px;line-height:20px;color:#000;transform:scaleX(0.845);transform-origin:100% 50%">0</div></div>
<div class="a" style="left:9px;top:533px;width:1552px;height:27px;background:#f8d9da"></div>
<div class="a" style="left:9px;top:559px;width:1552px;height:1px;background:#ececec"></div>
<div class="a" style="left:415px;top:533px;width:1px;height:27px;background:#ececec"></div>
<div class="t" style="left:12.5px;width:398.5px;top:532.07px;height:27px;overflow:hidden"><div class="t" style="left:0;top:3px;font-size:20px;line-height:20px;color:#000;transform:scaleX(0.845);transform-origin:0 50%">Кеди Nike Court Vision Lo CD5463-103 39(р) білий</div></div>
<div class="a" style="left:496px;top:533px;width:1px;height:27px;background:#ececec"></div>
<div class="t" style="left:419.5px;width:72.5px;top:532.07px;height:27px;overflow:hidden"><div class="t" style="left:0;top:3px;font-size:20px;line-height:20px;color:#000;transform:scaleX(0.845);transform-origin:0 50%">CD5463-103</div></div>
<div class="a" style="left:628px;top:533px;width:1px;height:27px;background:#ececec"></div>
<div class="t" style="left:500.5px;width:122.0px;top:532.07px;height:27px;overflow:hidden"><div class="t" style="left:0;top:3px;font-size:20px;line-height:20px;color:#000;transform:scaleX(0.845);transform-origin:0 50%">2940080000201</div></div>
<div class="a" style="left:730px;top:533px;width:1px;height:27px;background:#ececec"></div>
<div class="t" style="left:631px;width:96px;top:532.07px;height:27px;overflow:hidden"><div class="t" style="right:0;top:3px;font-size:20px;line-height:20px;color:#000;transform:scaleX(0.845);transform-origin:100% 50%">1 350,00</div></div>
<div class="a" style="left:777px;top:533px;width:1px;height:27px;background:#ececec"></div>
<div class="t" style="left:733px;width:38.5px;top:532.07px;height:27px;overflow:hidden"><div class="t" style="left:0;top:3px;font-size:20px;line-height:20px;color:#000;transform:scaleX(0.845);transform-origin:0 50%">грн</div></div>
<div class="a" style="left:828px;top:533px;width:1px;height:27px;background:#ececec"></div>
<div class="t" style="left:780px;width:45px;top:532.07px;height:27px;overflow:hidden"><div class="t" style="right:0;top:3px;font-size:20px;line-height:20px;color:#000;transform:scaleX(0.845);transform-origin:100% 50%">1</div></div>
<div class="a" style="left:930px;top:533px;width:1px;height:27px;background:#ececec"></div>
<div class="t" style="left:831px;width:96px;top:532.07px;height:27px;overflow:hidden"><div class="t" style="right:0;top:3px;font-size:20px;line-height:20px;color:#000;transform:scaleX(0.845);transform-origin:100% 50%">1 350,00</div></div>
<div class="a" style="left:1008px;top:533px;width:1px;height:27px;background:#ececec"></div>
<div class="t" style="left:933px;width:72px;top:532.07px;height:27px;overflow:hidden"><div class="t" style="right:0;top:3px;font-size:20px;line-height:20px;color:#000;transform:scaleX(0.845);transform-origin:100% 50%">98,44%</div></div>
<div class="a" style="left:1109px;top:533px;width:1px;height:27px;background:#ececec"></div>
<div class="t" style="left:1011px;width:95px;top:532.07px;height:27px;overflow:hidden"><div class="t" style="right:0;top:3px;font-size:20px;line-height:20px;color:#000;transform:scaleX(0.845);transform-origin:100% 50%">2 679,00</div></div>
<div class="a" style="left:1211px;top:533px;width:1px;height:27px;background:#ececec"></div>
<div class="t" style="left:1112px;width:96px;top:532.07px;height:27px;overflow:hidden"><div class="t" style="right:0;top:3px;font-size:20px;line-height:20px;color:#000;transform:scaleX(0.845);transform-origin:100% 50%">2 678,94</div></div>
<div class="a" style="left:1305px;top:533px;width:1px;height:27px;background:#ececec"></div>
<div class="t" style="left:1214px;width:88px;top:532.07px;height:27px;overflow:hidden"><div class="t" style="right:0;top:3px;font-size:20px;line-height:20px;color:#000;transform:scaleX(0.845);transform-origin:100% 50%">-0,06</div></div>
<div class="a" style="left:1354px;top:533px;width:1px;height:27px;background:#ececec"></div>
<div class="t" style="left:1308px;width:43px;top:532.07px;height:27px;overflow:hidden"><div class="t" style="right:0;top:3px;font-size:20px;line-height:20px;color:#000;transform:scaleX(0.845);transform-origin:100% 50%">0%</div></div>
<div class="a" style="left:1405px;top:533px;width:1px;height:27px;background:#ececec"></div>
<div class="t" style="left:1358.5px;width:42.5px;top:532.07px;height:27px;overflow:hidden"><div class="t" style="left:0;top:3px;font-size:20px;line-height:20px;color:#000;transform:scaleX(0.845);transform-origin:0 50%">1 350,00</div></div>
<div class="a" style="left:1483px;top:533px;width:1px;height:27px;background:#ececec"></div>
<div class="t" style="left:1408px;width:72px;top:532.07px;height:27px;overflow:hidden"><div class="t" style="right:0;top:3px;font-size:20px;line-height:20px;color:#000;transform:scaleX(0.845);transform-origin:100% 50%">1 350,00</div></div>
<div class="t" style="left:1486px;width:72px;top:532.07px;height:27px;overflow:hidden"><div class="t" style="right:0;top:3px;font-size:20px;line-height:20px;color:#000;transform:scaleX(0.845);transform-origin:100% 50%">1</div></div>
<div class="a" style="left:9px;top:560px;width:1552px;height:26px;background:#f8d9da"></div>
<div class="a" style="left:9px;top:585px;width:1552px;height:1px;background:#ececec"></div>
<div class="a" style="left:415px;top:560px;width:1px;height:26px;background:#ececec"></div>
<div class="t" style="left:12.5px;width:398.5px;top:559.07px;height:27px;overflow:hidden"><div class="t" style="left:0;top:3px;font-size:20px;line-height:20px;color:#000;transform:scaleX(0.83);transform-origin:0 50%">Кеди Nike Court Vision Lo CD5463-103 40,5(р) білий</div></div>
<div class="a" style="left:496px;top:560px;width:1px;height:26px;background:#ececec"></div>
<div class="t" style="left:419.5px;width:72.5px;top:559.07px;height:27px;overflow:hidden"><div class="t" style="left:0;top:3px;font-size:20px;line-height:20px;color:#000;transform:scaleX(0.845);transform-origin:0 50%">CD5463-103</div></div>
<div class="a" style="left:628px;top:560px;width:1px;height:26px;background:#ececec"></div>
<div class="t" style="left:500.5px;width:122.0px;top:559.07px;height:27px;overflow:hidden"><div class="t" style="left:0;top:3px;font-size:20px;line-height:20px;color:#000;transform:scaleX(0.845);transform-origin:0 50%">2940080000218</div></div>
<div class="a" style="left:730px;top:560px;width:1px;height:26px;background:#ececec"></div>
<div class="t" style="left:631px;width:96px;top:559.07px;height:27px;overflow:hidden"><div class="t" style="right:0;top:3px;font-size:20px;line-height:20px;color:#000;transform:scaleX(0.845);transform-origin:100% 50%">1 350,00</div></div>
<div class="a" style="left:777px;top:560px;width:1px;height:26px;background:#ececec"></div>
<div class="t" style="left:733px;width:38.5px;top:559.07px;height:27px;overflow:hidden"><div class="t" style="left:0;top:3px;font-size:20px;line-height:20px;color:#000;transform:scaleX(0.845);transform-origin:0 50%">грн</div></div>
<div class="a" style="left:828px;top:560px;width:1px;height:26px;background:#ececec"></div>
<div class="t" style="left:780px;width:45px;top:559.07px;height:27px;overflow:hidden"><div class="t" style="right:0;top:3px;font-size:20px;line-height:20px;color:#000;transform:scaleX(0.845);transform-origin:100% 50%">1</div></div>
<div class="a" style="left:930px;top:560px;width:1px;height:26px;background:#ececec"></div>
<div class="t" style="left:831px;width:96px;top:559.07px;height:27px;overflow:hidden"><div class="t" style="right:0;top:3px;font-size:20px;line-height:20px;color:#000;transform:scaleX(0.845);transform-origin:100% 50%">1 350,00</div></div>
<div class="a" style="left:1008px;top:560px;width:1px;height:26px;background:#ececec"></div>
<div class="t" style="left:933px;width:72px;top:559.07px;height:27px;overflow:hidden"><div class="t" style="right:0;top:3px;font-size:20px;line-height:20px;color:#000;transform:scaleX(0.845);transform-origin:100% 50%">98,44%</div></div>
<div class="a" style="left:1109px;top:560px;width:1px;height:26px;background:#ececec"></div>
<div class="t" style="left:1011px;width:95px;top:559.07px;height:27px;overflow:hidden"><div class="t" style="right:0;top:3px;font-size:20px;line-height:20px;color:#000;transform:scaleX(0.845);transform-origin:100% 50%">2 679,00</div></div>
<div class="a" style="left:1211px;top:560px;width:1px;height:26px;background:#ececec"></div>
<div class="t" style="left:1112px;width:96px;top:559.07px;height:27px;overflow:hidden"><div class="t" style="right:0;top:3px;font-size:20px;line-height:20px;color:#000;transform:scaleX(0.845);transform-origin:100% 50%">2 678,94</div></div>
<div class="a" style="left:1305px;top:560px;width:1px;height:26px;background:#ececec"></div>
<div class="t" style="left:1214px;width:88px;top:559.07px;height:27px;overflow:hidden"><div class="t" style="right:0;top:3px;font-size:20px;line-height:20px;color:#000;transform:scaleX(0.845);transform-origin:100% 50%">-0,06</div></div>
<div class="a" style="left:1354px;top:560px;width:1px;height:26px;background:#ececec"></div>
<div class="t" style="left:1308px;width:43px;top:559.07px;height:27px;overflow:hidden"><div class="t" style="right:0;top:3px;font-size:20px;line-height:20px;color:#000;transform:scaleX(0.845);transform-origin:100% 50%">0%</div></div>
<div class="a" style="left:1405px;top:560px;width:1px;height:26px;background:#ececec"></div>
<div class="t" style="left:1358.5px;width:42.5px;top:559.07px;height:27px;overflow:hidden"><div class="t" style="left:0;top:3px;font-size:20px;line-height:20px;color:#000;transform:scaleX(0.845);transform-origin:0 50%">1 350,00</div></div>
<div class="a" style="left:1483px;top:560px;width:1px;height:26px;background:#ececec"></div>
<div class="t" style="left:1408px;width:72px;top:559.07px;height:27px;overflow:hidden"><div class="t" style="right:0;top:3px;font-size:20px;line-height:20px;color:#000;transform:scaleX(0.845);transform-origin:100% 50%">1 350,00</div></div>
<div class="t" style="left:1486px;width:72px;top:559.07px;height:27px;overflow:hidden"><div class="t" style="right:0;top:3px;font-size:20px;line-height:20px;color:#000;transform:scaleX(0.845);transform-origin:100% 50%">0</div></div>
<div class="a" style="left:9px;top:586px;width:1552px;height:27px;background:#f8d9da"></div>
<div class="a" style="left:9px;top:612px;width:1552px;height:1px;background:#ececec"></div>
<div class="a" style="left:415px;top:586px;width:1px;height:27px;background:#ececec"></div>
<div class="t" style="left:12.5px;width:398.5px;top:585.07px;height:27px;overflow:hidden"><div class="t" style="left:0;top:3px;font-size:20px;line-height:20px;color:#000;transform:scaleX(0.845);transform-origin:0 50%">Кеди Nike Court Vision Lo CD5463-103 41(р) білий</div></div>
<div class="a" style="left:496px;top:586px;width:1px;height:27px;background:#ececec"></div>
<div class="t" style="left:419.5px;width:72.5px;top:585.07px;height:27px;overflow:hidden"><div class="t" style="left:0;top:3px;font-size:20px;line-height:20px;color:#000;transform:scaleX(0.845);transform-origin:0 50%">CD5463-103</div></div>
<div class="a" style="left:628px;top:586px;width:1px;height:27px;background:#ececec"></div>
<div class="t" style="left:500.5px;width:122.0px;top:585.07px;height:27px;overflow:hidden"><div class="t" style="left:0;top:3px;font-size:20px;line-height:20px;color:#000;transform:scaleX(0.845);transform-origin:0 50%">2940080000225</div></div>
<div class="a" style="left:730px;top:586px;width:1px;height:27px;background:#ececec"></div>
<div class="t" style="left:631px;width:96px;top:585.07px;height:27px;overflow:hidden"><div class="t" style="right:0;top:3px;font-size:20px;line-height:20px;color:#000;transform:scaleX(0.845);transform-origin:100% 50%">1 350,00</div></div>
<div class="a" style="left:777px;top:586px;width:1px;height:27px;background:#ececec"></div>
<div class="t" style="left:733px;width:38.5px;top:585.07px;height:27px;overflow:hidden"><div class="t" style="left:0;top:3px;font-size:20px;line-height:20px;color:#000;transform:scaleX(0.845);transform-origin:0 50%">грн</div></div>
<div class="a" style="left:828px;top:586px;width:1px;height:27px;background:#ececec"></div>
<div class="t" style="left:780px;width:45px;top:585.07px;height:27px;overflow:hidden"><div class="t" style="right:0;top:3px;font-size:20px;line-height:20px;color:#000;transform:scaleX(0.845);transform-origin:100% 50%">1</div></div>
<div class="a" style="left:930px;top:586px;width:1px;height:27px;background:#ececec"></div>
<div class="t" style="left:831px;width:96px;top:585.07px;height:27px;overflow:hidden"><div class="t" style="right:0;top:3px;font-size:20px;line-height:20px;color:#000;transform:scaleX(0.845);transform-origin:100% 50%">1 350,00</div></div>
<div class="a" style="left:1008px;top:586px;width:1px;height:27px;background:#ececec"></div>
<div class="t" style="left:933px;width:72px;top:585.07px;height:27px;overflow:hidden"><div class="t" style="right:0;top:3px;font-size:20px;line-height:20px;color:#000;transform:scaleX(0.845);transform-origin:100% 50%">98,44%</div></div>
<div class="a" style="left:1109px;top:586px;width:1px;height:27px;background:#ececec"></div>
<div class="t" style="left:1011px;width:95px;top:585.07px;height:27px;overflow:hidden"><div class="t" style="right:0;top:3px;font-size:20px;line-height:20px;color:#000;transform:scaleX(0.845);transform-origin:100% 50%">2 679,00</div></div>
<div class="a" style="left:1211px;top:586px;width:1px;height:27px;background:#ececec"></div>
<div class="t" style="left:1112px;width:96px;top:585.07px;height:27px;overflow:hidden"><div class="t" style="right:0;top:3px;font-size:20px;line-height:20px;color:#000;transform:scaleX(0.845);transform-origin:100% 50%">2 678,94</div></div>
<div class="a" style="left:1305px;top:586px;width:1px;height:27px;background:#ececec"></div>
<div class="t" style="left:1214px;width:88px;top:585.07px;height:27px;overflow:hidden"><div class="t" style="right:0;top:3px;font-size:20px;line-height:20px;color:#000;transform:scaleX(0.845);transform-origin:100% 50%">-0,06</div></div>
<div class="a" style="left:1354px;top:586px;width:1px;height:27px;background:#ececec"></div>
<div class="t" style="left:1308px;width:43px;top:585.07px;height:27px;overflow:hidden"><div class="t" style="right:0;top:3px;font-size:20px;line-height:20px;color:#000;transform:scaleX(0.845);transform-origin:100% 50%">0%</div></div>
<div class="a" style="left:1405px;top:586px;width:1px;height:27px;background:#ececec"></div>
<div class="t" style="left:1358.5px;width:42.5px;top:585.07px;height:27px;overflow:hidden"><div class="t" style="left:0;top:3px;font-size:20px;line-height:20px;color:#000;transform:scaleX(0.845);transform-origin:0 50%">1 350,00</div></div>
<div class="a" style="left:1483px;top:586px;width:1px;height:27px;background:#ececec"></div>
<div class="t" style="left:1408px;width:72px;top:585.07px;height:27px;overflow:hidden"><div class="t" style="right:0;top:3px;font-size:20px;line-height:20px;color:#000;transform:scaleX(0.845);transform-origin:100% 50%">1 350,00</div></div>
<div class="t" style="left:1486px;width:72px;top:585.07px;height:27px;overflow:hidden"><div class="t" style="right:0;top:3px;font-size:20px;line-height:20px;color:#000;transform:scaleX(0.845);transform-origin:100% 50%">-1</div></div>
<div class="a" style="left:9px;top:613px;width:1552px;height:26px;background:#f8d9da"></div>
<div class="a" style="left:9px;top:638px;width:1552px;height:1px;background:#ececec"></div>
<div class="a" style="left:415px;top:613px;width:1px;height:26px;background:#ececec"></div>
<div class="t" style="left:12.5px;width:398.5px;top:612.07px;height:27px;overflow:hidden"><div class="t" style="left:0;top:3px;font-size:20px;line-height:20px;color:#000;transform:scaleX(0.845);transform-origin:0 50%">Кеди Nike Court Vision Lo CD5463-103 42(р) білий</div></div>
<div class="a" style="left:496px;top:613px;width:1px;height:26px;background:#ececec"></div>
<div class="t" style="left:419.5px;width:72.5px;top:612.07px;height:27px;overflow:hidden"><div class="t" style="left:0;top:3px;font-size:20px;line-height:20px;color:#000;transform:scaleX(0.845);transform-origin:0 50%">CD5463-103</div></div>
<div class="a" style="left:628px;top:613px;width:1px;height:26px;background:#ececec"></div>
<div class="t" style="left:500.5px;width:122.0px;top:612.07px;height:27px;overflow:hidden"><div class="t" style="left:0;top:3px;font-size:20px;line-height:20px;color:#000;transform:scaleX(0.845);transform-origin:0 50%">2940080000232</div></div>
<div class="a" style="left:730px;top:613px;width:1px;height:26px;background:#ececec"></div>
<div class="t" style="left:631px;width:96px;top:612.07px;height:27px;overflow:hidden"><div class="t" style="right:0;top:3px;font-size:20px;line-height:20px;color:#000;transform:scaleX(0.845);transform-origin:100% 50%">1 350,00</div></div>
<div class="a" style="left:777px;top:613px;width:1px;height:26px;background:#ececec"></div>
<div class="t" style="left:733px;width:38.5px;top:612.07px;height:27px;overflow:hidden"><div class="t" style="left:0;top:3px;font-size:20px;line-height:20px;color:#000;transform:scaleX(0.845);transform-origin:0 50%">грн</div></div>
<div class="a" style="left:828px;top:613px;width:1px;height:26px;background:#ececec"></div>
<div class="t" style="left:780px;width:45px;top:612.07px;height:27px;overflow:hidden"><div class="t" style="right:0;top:3px;font-size:20px;line-height:20px;color:#000;transform:scaleX(0.845);transform-origin:100% 50%">1</div></div>
<div class="a" style="left:930px;top:613px;width:1px;height:26px;background:#ececec"></div>
<div class="t" style="left:831px;width:96px;top:612.07px;height:27px;overflow:hidden"><div class="t" style="right:0;top:3px;font-size:20px;line-height:20px;color:#000;transform:scaleX(0.845);transform-origin:100% 50%">1 350,00</div></div>
<div class="a" style="left:1008px;top:613px;width:1px;height:26px;background:#ececec"></div>
<div class="t" style="left:933px;width:72px;top:612.07px;height:27px;overflow:hidden"><div class="t" style="right:0;top:3px;font-size:20px;line-height:20px;color:#000;transform:scaleX(0.845);transform-origin:100% 50%">98,44%</div></div>
<div class="a" style="left:1109px;top:613px;width:1px;height:26px;background:#ececec"></div>
<div class="t" style="left:1011px;width:95px;top:612.07px;height:27px;overflow:hidden"><div class="t" style="right:0;top:3px;font-size:20px;line-height:20px;color:#000;transform:scaleX(0.845);transform-origin:100% 50%">2 679,00</div></div>
<div class="a" style="left:1211px;top:613px;width:1px;height:26px;background:#ececec"></div>
<div class="t" style="left:1112px;width:96px;top:612.07px;height:27px;overflow:hidden"><div class="t" style="right:0;top:3px;font-size:20px;line-height:20px;color:#000;transform:scaleX(0.845);transform-origin:100% 50%">2 678,94</div></div>
<div class="a" style="left:1305px;top:613px;width:1px;height:26px;background:#ececec"></div>
<div class="t" style="left:1214px;width:88px;top:612.07px;height:27px;overflow:hidden"><div class="t" style="right:0;top:3px;font-size:20px;line-height:20px;color:#000;transform:scaleX(0.845);transform-origin:100% 50%">-0,06</div></div>
<div class="a" style="left:1354px;top:613px;width:1px;height:26px;background:#ececec"></div>
<div class="t" style="left:1308px;width:43px;top:612.07px;height:27px;overflow:hidden"><div class="t" style="right:0;top:3px;font-size:20px;line-height:20px;color:#000;transform:scaleX(0.845);transform-origin:100% 50%">0%</div></div>
<div class="a" style="left:1405px;top:613px;width:1px;height:26px;background:#ececec"></div>
<div class="t" style="left:1358.5px;width:42.5px;top:612.07px;height:27px;overflow:hidden"><div class="t" style="left:0;top:3px;font-size:20px;line-height:20px;color:#000;transform:scaleX(0.845);transform-origin:0 50%">1 350,00</div></div>
<div class="a" style="left:1483px;top:613px;width:1px;height:26px;background:#ececec"></div>
<div class="t" style="left:1408px;width:72px;top:612.07px;height:27px;overflow:hidden"><div class="t" style="right:0;top:3px;font-size:20px;line-height:20px;color:#000;transform:scaleX(0.845);transform-origin:100% 50%">1 350,00</div></div>
<div class="t" style="left:1486px;width:72px;top:612.07px;height:27px;overflow:hidden"><div class="t" style="right:0;top:3px;font-size:20px;line-height:20px;color:#000;transform:scaleX(0.845);transform-origin:100% 50%">-1</div></div>
<div class="a" style="left:9px;top:639px;width:1552px;height:27px;background:#f8d9da"></div>
<div class="a" style="left:9px;top:665px;width:1552px;height:1px;background:#ececec"></div>
<div class="a" style="left:415px;top:639px;width:1px;height:27px;background:#ececec"></div>
<div class="t" style="left:12.5px;width:398.5px;top:638.07px;height:27px;overflow:hidden"><div class="t" style="left:0;top:3px;font-size:20px;line-height:20px;color:#000;transform:scaleX(0.845);transform-origin:0 50%">Кеди Nike Court Vision Lo CD5463-103 43(р) білий</div></div>
<div class="a" style="left:496px;top:639px;width:1px;height:27px;background:#ececec"></div>
<div class="t" style="left:419.5px;width:72.5px;top:638.07px;height:27px;overflow:hidden"><div class="t" style="left:0;top:3px;font-size:20px;line-height:20px;color:#000;transform:scaleX(0.845);transform-origin:0 50%">CD5463-103</div></div>
<div class="a" style="left:628px;top:639px;width:1px;height:27px;background:#ececec"></div>
<div class="t" style="left:500.5px;width:122.0px;top:638.07px;height:27px;overflow:hidden"><div class="t" style="left:0;top:3px;font-size:20px;line-height:20px;color:#000;transform:scaleX(0.845);transform-origin:0 50%">2940080000249</div></div>
<div class="a" style="left:730px;top:639px;width:1px;height:27px;background:#ececec"></div>
<div class="t" style="left:631px;width:96px;top:638.07px;height:27px;overflow:hidden"><div class="t" style="right:0;top:3px;font-size:20px;line-height:20px;color:#000;transform:scaleX(0.845);transform-origin:100% 50%">1 350,00</div></div>
<div class="a" style="left:777px;top:639px;width:1px;height:27px;background:#ececec"></div>
<div class="t" style="left:733px;width:38.5px;top:638.07px;height:27px;overflow:hidden"><div class="t" style="left:0;top:3px;font-size:20px;line-height:20px;color:#000;transform:scaleX(0.845);transform-origin:0 50%">грн</div></div>
<div class="a" style="left:828px;top:639px;width:1px;height:27px;background:#ececec"></div>
<div class="t" style="left:780px;width:45px;top:638.07px;height:27px;overflow:hidden"><div class="t" style="right:0;top:3px;font-size:20px;line-height:20px;color:#000;transform:scaleX(0.845);transform-origin:100% 50%">1</div></div>
<div class="a" style="left:930px;top:639px;width:1px;height:27px;background:#ececec"></div>
<div class="t" style="left:831px;width:96px;top:638.07px;height:27px;overflow:hidden"><div class="t" style="right:0;top:3px;font-size:20px;line-height:20px;color:#000;transform:scaleX(0.845);transform-origin:100% 50%">1 350,00</div></div>
<div class="a" style="left:1008px;top:639px;width:1px;height:27px;background:#ececec"></div>
<div class="t" style="left:933px;width:72px;top:638.07px;height:27px;overflow:hidden"><div class="t" style="right:0;top:3px;font-size:20px;line-height:20px;color:#000;transform:scaleX(0.845);transform-origin:100% 50%">98,44%</div></div>
<div class="a" style="left:1109px;top:639px;width:1px;height:27px;background:#ececec"></div>
<div class="t" style="left:1011px;width:95px;top:638.07px;height:27px;overflow:hidden"><div class="t" style="right:0;top:3px;font-size:20px;line-height:20px;color:#000;transform:scaleX(0.845);transform-origin:100% 50%">2 679,00</div></div>
<div class="a" style="left:1211px;top:639px;width:1px;height:27px;background:#ececec"></div>
<div class="t" style="left:1112px;width:96px;top:638.07px;height:27px;overflow:hidden"><div class="t" style="right:0;top:3px;font-size:20px;line-height:20px;color:#000;transform:scaleX(0.845);transform-origin:100% 50%">2 678,94</div></div>
<div class="a" style="left:1305px;top:639px;width:1px;height:27px;background:#ececec"></div>
<div class="t" style="left:1214px;width:88px;top:638.07px;height:27px;overflow:hidden"><div class="t" style="right:0;top:3px;font-size:20px;line-height:20px;color:#000;transform:scaleX(0.845);transform-origin:100% 50%">-0,06</div></div>
<div class="a" style="left:1354px;top:639px;width:1px;height:27px;background:#ececec"></div>
<div class="t" style="left:1308px;width:43px;top:638.07px;height:27px;overflow:hidden"><div class="t" style="right:0;top:3px;font-size:20px;line-height:20px;color:#000;transform:scaleX(0.845);transform-origin:100% 50%">0%</div></div>
<div class="a" style="left:1405px;top:639px;width:1px;height:27px;background:#ececec"></div>
<div class="t" style="left:1358.5px;width:42.5px;top:638.07px;height:27px;overflow:hidden"><div class="t" style="left:0;top:3px;font-size:20px;line-height:20px;color:#000;transform:scaleX(0.845);transform-origin:0 50%">1 350,00</div></div>
<div class="a" style="left:1483px;top:639px;width:1px;height:27px;background:#ececec"></div>
<div class="t" style="left:1408px;width:72px;top:638.07px;height:27px;overflow:hidden"><div class="t" style="right:0;top:3px;font-size:20px;line-height:20px;color:#000;transform:scaleX(0.845);transform-origin:100% 50%">1 350,00</div></div>
<div class="t" style="left:1486px;width:72px;top:638.07px;height:27px;overflow:hidden"><div class="t" style="right:0;top:3px;font-size:20px;line-height:20px;color:#000;transform:scaleX(0.845);transform-origin:100% 50%">0</div></div>
<div class="a" style="left:9px;top:666px;width:1552px;height:26px;background:#f8d9da"></div>
<div class="a" style="left:9px;top:691px;width:1552px;height:1px;background:#ececec"></div>
<div class="a" style="left:415px;top:666px;width:1px;height:26px;background:#ececec"></div>
<div class="t" style="left:12.5px;width:398.5px;top:665.07px;height:27px;overflow:hidden"><div class="t" style="left:0;top:3px;font-size:20px;line-height:20px;color:#000;transform:scaleX(0.845);transform-origin:0 50%">Кеди Nike Court Vision Lo CD5463-103 44(р) білий</div></div>
<div class="a" style="left:496px;top:666px;width:1px;height:26px;background:#ececec"></div>
<div class="t" style="left:419.5px;width:72.5px;top:665.07px;height:27px;overflow:hidden"><div class="t" style="left:0;top:3px;font-size:20px;line-height:20px;color:#000;transform:scaleX(0.845);transform-origin:0 50%">CD5463-103</div></div>
<div class="a" style="left:628px;top:666px;width:1px;height:26px;background:#ececec"></div>
<div class="t" style="left:500.5px;width:122.0px;top:665.07px;height:27px;overflow:hidden"><div class="t" style="left:0;top:3px;font-size:20px;line-height:20px;color:#000;transform:scaleX(0.845);transform-origin:0 50%">2940080000256</div></div>
<div class="a" style="left:730px;top:666px;width:1px;height:26px;background:#ececec"></div>
<div class="t" style="left:631px;width:96px;top:665.07px;height:27px;overflow:hidden"><div class="t" style="right:0;top:3px;font-size:20px;line-height:20px;color:#000;transform:scaleX(0.845);transform-origin:100% 50%">1 350,00</div></div>
<div class="a" style="left:777px;top:666px;width:1px;height:26px;background:#ececec"></div>
<div class="t" style="left:733px;width:38.5px;top:665.07px;height:27px;overflow:hidden"><div class="t" style="left:0;top:3px;font-size:20px;line-height:20px;color:#000;transform:scaleX(0.845);transform-origin:0 50%">грн</div></div>
<div class="a" style="left:828px;top:666px;width:1px;height:26px;background:#ececec"></div>
<div class="t" style="left:780px;width:45px;top:665.07px;height:27px;overflow:hidden"><div class="t" style="right:0;top:3px;font-size:20px;line-height:20px;color:#000;transform:scaleX(0.845);transform-origin:100% 50%">1</div></div>
<div class="a" style="left:930px;top:666px;width:1px;height:26px;background:#ececec"></div>
<div class="t" style="left:831px;width:96px;top:665.07px;height:27px;overflow:hidden"><div class="t" style="right:0;top:3px;font-size:20px;line-height:20px;color:#000;transform:scaleX(0.845);transform-origin:100% 50%">1 350,00</div></div>
<div class="a" style="left:1008px;top:666px;width:1px;height:26px;background:#ececec"></div>
<div class="t" style="left:933px;width:72px;top:665.07px;height:27px;overflow:hidden"><div class="t" style="right:0;top:3px;font-size:20px;line-height:20px;color:#000;transform:scaleX(0.845);transform-origin:100% 50%">98,44%</div></div>
<div class="a" style="left:1109px;top:666px;width:1px;height:26px;background:#ececec"></div>
<div class="t" style="left:1011px;width:95px;top:665.07px;height:27px;overflow:hidden"><div class="t" style="right:0;top:3px;font-size:20px;line-height:20px;color:#000;transform:scaleX(0.845);transform-origin:100% 50%">2 679,00</div></div>
<div class="a" style="left:1211px;top:666px;width:1px;height:26px;background:#ececec"></div>
<div class="t" style="left:1112px;width:96px;top:665.07px;height:27px;overflow:hidden"><div class="t" style="right:0;top:3px;font-size:20px;line-height:20px;color:#000;transform:scaleX(0.845);transform-origin:100% 50%">2 678,94</div></div>
<div class="a" style="left:1305px;top:666px;width:1px;height:26px;background:#ececec"></div>
<div class="t" style="left:1214px;width:88px;top:665.07px;height:27px;overflow:hidden"><div class="t" style="right:0;top:3px;font-size:20px;line-height:20px;color:#000;transform:scaleX(0.845);transform-origin:100% 50%">-0,06</div></div>
<div class="a" style="left:1354px;top:666px;width:1px;height:26px;background:#ececec"></div>
<div class="t" style="left:1308px;width:43px;top:665.07px;height:27px;overflow:hidden"><div class="t" style="right:0;top:3px;font-size:20px;line-height:20px;color:#000;transform:scaleX(0.845);transform-origin:100% 50%">0%</div></div>
<div class="a" style="left:1405px;top:666px;width:1px;height:26px;background:#ececec"></div>
<div class="t" style="left:1358.5px;width:42.5px;top:665.07px;height:27px;overflow:hidden"><div class="t" style="left:0;top:3px;font-size:20px;line-height:20px;color:#000;transform:scaleX(0.845);transform-origin:0 50%">1 350,00</div></div>
<div class="a" style="left:1483px;top:666px;width:1px;height:26px;background:#ececec"></div>
<div class="t" style="left:1408px;width:72px;top:665.07px;height:27px;overflow:hidden"><div class="t" style="right:0;top:3px;font-size:20px;line-height:20px;color:#000;transform:scaleX(0.845);transform-origin:100% 50%">1 350,00</div></div>
<div class="t" style="left:1486px;width:72px;top:665.07px;height:27px;overflow:hidden"><div class="t" style="right:0;top:3px;font-size:20px;line-height:20px;color:#000;transform:scaleX(0.845);transform-origin:100% 50%">0</div></div>
<div class="a" style="left:9px;top:692px;width:1552px;height:27px;background:#d3f5dd"></div>
<div class="a" style="left:9px;top:718px;width:1552px;height:1px;background:#ececec"></div>
<div class="a" style="left:415px;top:692px;width:1px;height:27px;background:#ececec"></div>
<div class="t" style="left:12.5px;width:398.5px;top:691.07px;height:27px;overflow:hidden"><div class="t" style="left:0;top:3px;font-size:20px;line-height:20px;color:#000;transform:scaleX(0.845);transform-origin:0 50%">Кеди Puma Keating зелений</div></div>
<div class="a" style="left:496px;top:692px;width:1px;height:27px;background:#ececec"></div>
<div class="a" style="left:628px;top:692px;width:1px;height:27px;background:#ececec"></div>
<div class="t" style="left:500.5px;width:122.0px;top:691.07px;height:27px;overflow:hidden"><div class="t" style="left:0;top:3px;font-size:20px;line-height:20px;color:#000;transform:scaleX(0.845);transform-origin:0 50%">2911200012411</div></div>
<div class="a" style="left:730px;top:692px;width:1px;height:27px;background:#ececec"></div>
<div class="t" style="left:631px;width:96px;top:691.07px;height:27px;overflow:hidden"><div class="t" style="right:0;top:3px;font-size:20px;line-height:20px;color:#000;transform:scaleX(0.845);transform-origin:100% 50%">1 260,00</div></div>
<div class="a" style="left:777px;top:692px;width:1px;height:27px;background:#ececec"></div>
<div class="t" style="left:733px;width:38.5px;top:691.07px;height:27px;overflow:hidden"><div class="t" style="left:0;top:3px;font-size:20px;line-height:20px;color:#000;transform:scaleX(0.845);transform-origin:0 50%">грн</div></div>
<div class="a" style="left:828px;top:692px;width:1px;height:27px;background:#ececec"></div>
<div class="t" style="left:780px;width:45px;top:691.07px;height:27px;overflow:hidden"><div class="t" style="right:0;top:3px;font-size:20px;line-height:20px;color:#000;transform:scaleX(0.845);transform-origin:100% 50%">1</div></div>
<div class="a" style="left:930px;top:692px;width:1px;height:27px;background:#ececec"></div>
<div class="t" style="left:831px;width:96px;top:691.07px;height:27px;overflow:hidden"><div class="t" style="right:0;top:3px;font-size:20px;line-height:20px;color:#000;transform:scaleX(0.845);transform-origin:100% 50%">1 260,00</div></div>
<div class="a" style="left:1008px;top:692px;width:1px;height:27px;background:#ececec"></div>
<div class="t" style="left:933px;width:72px;top:691.07px;height:27px;overflow:hidden"><div class="t" style="right:0;top:3px;font-size:20px;line-height:20px;color:#000;transform:scaleX(0.845);transform-origin:100% 50%">63,27%</div></div>
<div class="a" style="left:1109px;top:692px;width:1px;height:27px;background:#ececec"></div>
<div class="t" style="left:1011px;width:95px;top:691.07px;height:27px;overflow:hidden"><div class="t" style="right:0;top:3px;font-size:20px;line-height:20px;color:#000;transform:scaleX(0.845);transform-origin:100% 50%">2 057,16</div></div>
<div class="a" style="left:1211px;top:692px;width:1px;height:27px;background:#ececec"></div>
<div class="t" style="left:1112px;width:96px;top:691.07px;height:27px;overflow:hidden"><div class="t" style="right:0;top:3px;font-size:20px;line-height:20px;color:#000;transform:scaleX(0.845);transform-origin:100% 50%">2 057,20</div></div>
<div class="a" style="left:1305px;top:692px;width:1px;height:27px;background:#ececec"></div>
<div class="t" style="left:1214px;width:88px;top:691.07px;height:27px;overflow:hidden"><div class="t" style="right:0;top:3px;font-size:20px;line-height:20px;color:#000;transform:scaleX(0.845);transform-origin:100% 50%">+0,04</div></div>
<div class="a" style="left:1354px;top:692px;width:1px;height:27px;background:#ececec"></div>
<div class="t" style="left:1309.5px;width:40.5px;top:691.07px;height:27px;overflow:hidden"><div class="t" style="left:0;top:3px;font-size:20px;line-height:20px;color:#000;transform:scaleX(0.845);transform-origin:0 50%">-4,76%</div></div>
<div class="a" style="left:1405px;top:692px;width:1px;height:27px;background:#ececec"></div>
<div class="t" style="left:1358.5px;width:42.5px;top:691.07px;height:27px;overflow:hidden"><div class="t" style="left:0;top:3px;font-size:20px;line-height:20px;color:#000;transform:scaleX(0.845);transform-origin:0 50%">1 200,00</div></div>
<div class="a" style="left:1483px;top:692px;width:1px;height:27px;background:#ececec"></div>
<div class="t" style="left:1408px;width:72px;top:691.07px;height:27px;overflow:hidden"><div class="t" style="right:0;top:3px;font-size:20px;line-height:20px;color:#000;transform:scaleX(0.845);transform-origin:100% 50%">1 200,02</div></div>
<div class="t" style="left:1486px;width:72px;top:691.07px;height:27px;overflow:hidden"><div class="t" style="right:0;top:3px;font-size:20px;line-height:20px;color:#000;transform:scaleX(0.845);transform-origin:100% 50%">2</div></div>
<div class="a" style="left:9px;top:719px;width:1552px;height:26px;background:#d3f5dd"></div>
<div class="a" style="left:9px;top:744px;width:1552px;height:1px;background:#ececec"></div>
<div class="a" style="left:415px;top:719px;width:1px;height:26px;background:#ececec"></div>
<div class="t" style="left:12.5px;width:398.5px;top:718.07px;height:27px;overflow:hidden"><div class="t" style="left:0;top:3px;font-size:20px;line-height:20px;color:#000;transform:scaleX(0.845);transform-origin:0 50%">Кеди Puma Shuffle 30966811 42,5(р) темно-синій</div></div>
<div class="a" style="left:496px;top:719px;width:1px;height:26px;background:#ececec"></div>
<div class="t" style="left:419.5px;width:72.5px;top:718.07px;height:27px;overflow:hidden"><div class="t" style="left:0;top:3px;font-size:20px;line-height:20px;color:#000;transform:scaleX(0.845);transform-origin:0 50%">30966811</div></div>
<div class="a" style="left:628px;top:719px;width:1px;height:26px;background:#ececec"></div>
<div class="t" style="left:500.5px;width:122.0px;top:718.07px;height:27px;overflow:hidden"><div class="t" style="left:0;top:3px;font-size:20px;line-height:20px;color:#000;transform:scaleX(0.845);transform-origin:0 50%">2940080000263</div></div>
<div class="a" style="left:730px;top:719px;width:1px;height:26px;background:#ececec"></div>
<div class="t" style="left:631px;width:96px;top:718.07px;height:27px;overflow:hidden"><div class="t" style="right:0;top:3px;font-size:20px;line-height:20px;color:#000;transform:scaleX(0.845);transform-origin:100% 50%">650,00</div></div>
<div class="a" style="left:777px;top:719px;width:1px;height:26px;background:#ececec"></div>
<div class="t" style="left:733px;width:38.5px;top:718.07px;height:27px;overflow:hidden"><div class="t" style="left:0;top:3px;font-size:20px;line-height:20px;color:#000;transform:scaleX(0.845);transform-origin:0 50%">грн</div></div>
<div class="a" style="left:828px;top:719px;width:1px;height:26px;background:#ececec"></div>
<div class="t" style="left:780px;width:45px;top:718.07px;height:27px;overflow:hidden"><div class="t" style="right:0;top:3px;font-size:20px;line-height:20px;color:#000;transform:scaleX(0.845);transform-origin:100% 50%">1</div></div>
<div class="a" style="left:930px;top:719px;width:1px;height:26px;background:#ececec"></div>
<div class="t" style="left:831px;width:96px;top:718.07px;height:27px;overflow:hidden"><div class="t" style="right:0;top:3px;font-size:20px;line-height:20px;color:#000;transform:scaleX(0.845);transform-origin:100% 50%">650,00</div></div>
<div class="a" style="left:1008px;top:719px;width:1px;height:26px;background:#ececec"></div>
<div class="t" style="left:933px;width:72px;top:718.07px;height:27px;overflow:hidden"><div class="t" style="right:0;top:3px;font-size:20px;line-height:20px;color:#000;transform:scaleX(0.845);transform-origin:100% 50%">53,85%</div></div>
<div class="a" style="left:1109px;top:719px;width:1px;height:26px;background:#ececec"></div>
<div class="t" style="left:1011px;width:95px;top:718.07px;height:27px;overflow:hidden"><div class="t" style="right:0;top:3px;font-size:20px;line-height:20px;color:#000;transform:scaleX(0.845);transform-origin:100% 50%">1 000,00</div></div>
<div class="a" style="left:1211px;top:719px;width:1px;height:26px;background:#ececec"></div>
<div class="t" style="left:1112px;width:96px;top:718.07px;height:27px;overflow:hidden"><div class="t" style="right:0;top:3px;font-size:20px;line-height:20px;color:#000;transform:scaleX(0.845);transform-origin:100% 50%">1 000,03</div></div>
<div class="a" style="left:1305px;top:719px;width:1px;height:26px;background:#ececec"></div>
<div class="t" style="left:1214px;width:88px;top:718.07px;height:27px;overflow:hidden"><div class="t" style="right:0;top:3px;font-size:20px;line-height:20px;color:#000;transform:scaleX(0.845);transform-origin:100% 50%">+0,03</div></div>
<div class="a" style="left:1354px;top:719px;width:1px;height:26px;background:#ececec"></div>
<div class="t" style="left:1308px;width:43px;top:718.07px;height:27px;overflow:hidden"><div class="t" style="right:0;top:3px;font-size:20px;line-height:20px;color:#000;transform:scaleX(0.845);transform-origin:100% 50%">0%</div></div>
<div class="a" style="left:1405px;top:719px;width:1px;height:26px;background:#ececec"></div>
<div class="t" style="left:1358.5px;width:42.5px;top:718.07px;height:27px;overflow:hidden"><div class="t" style="left:0;top:3px;font-size:20px;line-height:20px;color:#000;transform:scaleX(0.845);transform-origin:0 50%">650,00</div></div>
<div class="a" style="left:1483px;top:719px;width:1px;height:26px;background:#ececec"></div>
<div class="t" style="left:1408px;width:72px;top:718.07px;height:27px;overflow:hidden"><div class="t" style="right:0;top:3px;font-size:20px;line-height:20px;color:#000;transform:scaleX(0.845);transform-origin:100% 50%">650,00</div></div>
<div class="t" style="left:1486px;width:72px;top:718.07px;height:27px;overflow:hidden"><div class="t" style="right:0;top:3px;font-size:20px;line-height:20px;color:#000;transform:scaleX(0.845);transform-origin:100% 50%">1</div></div>
<div class="a" style="left:9px;top:745px;width:1552px;height:27px;background:#d3f5dd"></div>
<div class="a" style="left:9px;top:771px;width:1552px;height:1px;background:#ececec"></div>
<div class="a" style="left:415px;top:745px;width:1px;height:27px;background:#ececec"></div>
<div class="t" style="left:12.5px;width:398.5px;top:744.07px;height:27px;overflow:hidden"><div class="t" style="left:0;top:3px;font-size:20px;line-height:20px;color:#000;transform:scaleX(0.845);transform-origin:0 50%">Кеди Puma Shuffle 30966811 44(р) темно-синій</div></div>
<div class="a" style="left:496px;top:745px;width:1px;height:27px;background:#ececec"></div>
<div class="t" style="left:419.5px;width:72.5px;top:744.07px;height:27px;overflow:hidden"><div class="t" style="left:0;top:3px;font-size:20px;line-height:20px;color:#000;transform:scaleX(0.845);transform-origin:0 50%">30966811</div></div>
<div class="a" style="left:628px;top:745px;width:1px;height:27px;background:#ececec"></div>
<div class="t" style="left:500.5px;width:122.0px;top:744.07px;height:27px;overflow:hidden"><div class="t" style="left:0;top:3px;font-size:20px;line-height:20px;color:#000;transform:scaleX(0.845);transform-origin:0 50%">2940080000270</div></div>
<div class="a" style="left:730px;top:745px;width:1px;height:27px;background:#ececec"></div>
<div class="t" style="left:631px;width:96px;top:744.07px;height:27px;overflow:hidden"><div class="t" style="right:0;top:3px;font-size:20px;line-height:20px;color:#000;transform:scaleX(0.845);transform-origin:100% 50%">650,00</div></div>
<div class="a" style="left:777px;top:745px;width:1px;height:27px;background:#ececec"></div>
<div class="t" style="left:733px;width:38.5px;top:744.07px;height:27px;overflow:hidden"><div class="t" style="left:0;top:3px;font-size:20px;line-height:20px;color:#000;transform:scaleX(0.845);transform-origin:0 50%">грн</div></div>
<div class="a" style="left:828px;top:745px;width:1px;height:27px;background:#ececec"></div>
<div class="t" style="left:780px;width:45px;top:744.07px;height:27px;overflow:hidden"><div class="t" style="right:0;top:3px;font-size:20px;line-height:20px;color:#000;transform:scaleX(0.845);transform-origin:100% 50%">1</div></div>
<div class="a" style="left:930px;top:745px;width:1px;height:27px;background:#ececec"></div>
<div class="t" style="left:831px;width:96px;top:744.07px;height:27px;overflow:hidden"><div class="t" style="right:0;top:3px;font-size:20px;line-height:20px;color:#000;transform:scaleX(0.845);transform-origin:100% 50%">650,00</div></div>
<div class="a" style="left:1008px;top:745px;width:1px;height:27px;background:#ececec"></div>
<div class="t" style="left:933px;width:72px;top:744.07px;height:27px;overflow:hidden"><div class="t" style="right:0;top:3px;font-size:20px;line-height:20px;color:#000;transform:scaleX(0.845);transform-origin:100% 50%">53,85%</div></div>
<div class="a" style="left:1109px;top:745px;width:1px;height:27px;background:#ececec"></div>
<div class="t" style="left:1011px;width:95px;top:744.07px;height:27px;overflow:hidden"><div class="t" style="right:0;top:3px;font-size:20px;line-height:20px;color:#000;transform:scaleX(0.845);transform-origin:100% 50%">1 000,00</div></div>
<div class="a" style="left:1211px;top:745px;width:1px;height:27px;background:#ececec"></div>
<div class="t" style="left:1112px;width:96px;top:744.07px;height:27px;overflow:hidden"><div class="t" style="right:0;top:3px;font-size:20px;line-height:20px;color:#000;transform:scaleX(0.845);transform-origin:100% 50%">1 000,03</div></div>
<div class="a" style="left:1305px;top:745px;width:1px;height:27px;background:#ececec"></div>
<div class="t" style="left:1214px;width:88px;top:744.07px;height:27px;overflow:hidden"><div class="t" style="right:0;top:3px;font-size:20px;line-height:20px;color:#000;transform:scaleX(0.845);transform-origin:100% 50%">+0,03</div></div>
<div class="a" style="left:1354px;top:745px;width:1px;height:27px;background:#ececec"></div>
<div class="t" style="left:1308px;width:43px;top:744.07px;height:27px;overflow:hidden"><div class="t" style="right:0;top:3px;font-size:20px;line-height:20px;color:#000;transform:scaleX(0.845);transform-origin:100% 50%">0%</div></div>
<div class="a" style="left:1405px;top:745px;width:1px;height:27px;background:#ececec"></div>
<div class="t" style="left:1358.5px;width:42.5px;top:744.07px;height:27px;overflow:hidden"><div class="t" style="left:0;top:3px;font-size:20px;line-height:20px;color:#000;transform:scaleX(0.845);transform-origin:0 50%">650,00</div></div>
<div class="a" style="left:1483px;top:745px;width:1px;height:27px;background:#ececec"></div>
<div class="t" style="left:1408px;width:72px;top:744.07px;height:27px;overflow:hidden"><div class="t" style="right:0;top:3px;font-size:20px;line-height:20px;color:#000;transform:scaleX(0.845);transform-origin:100% 50%">650,00</div></div>
<div class="t" style="left:1486px;width:72px;top:744.07px;height:27px;overflow:hidden"><div class="t" style="right:0;top:3px;font-size:20px;line-height:20px;color:#000;transform:scaleX(0.845);transform-origin:100% 50%">1</div></div>
<div class="a" style="left:9px;top:772px;width:1552px;height:26px;background:#d3f5dd"></div>
<div class="a" style="left:9px;top:797px;width:1552px;height:1px;background:#ececec"></div>
<div class="a" style="left:415px;top:772px;width:1px;height:26px;background:#ececec"></div>
<div class="t" style="left:12.5px;width:398.5px;top:771.07px;height:27px;overflow:hidden"><div class="t" style="left:0;top:3px;font-size:20px;line-height:20px;color:#000;transform:scaleX(0.845);transform-origin:0 50%">Кеди Puma Shuffle 30966811 44,5(р) темно-синій</div></div>
<div class="a" style="left:496px;top:772px;width:1px;height:26px;background:#ececec"></div>
<div class="t" style="left:419.5px;width:72.5px;top:771.07px;height:27px;overflow:hidden"><div class="t" style="left:0;top:3px;font-size:20px;line-height:20px;color:#000;transform:scaleX(0.845);transform-origin:0 50%">30966811</div></div>
<div class="a" style="left:628px;top:772px;width:1px;height:26px;background:#ececec"></div>
<div class="t" style="left:500.5px;width:122.0px;top:771.07px;height:27px;overflow:hidden"><div class="t" style="left:0;top:3px;font-size:20px;line-height:20px;color:#000;transform:scaleX(0.845);transform-origin:0 50%">2940080000287</div></div>
<div class="a" style="left:730px;top:772px;width:1px;height:26px;background:#ececec"></div>
<div class="t" style="left:631px;width:96px;top:771.07px;height:27px;overflow:hidden"><div class="t" style="right:0;top:3px;font-size:20px;line-height:20px;color:#000;transform:scaleX(0.845);transform-origin:100% 50%">650,00</div></div>
<div class="a" style="left:777px;top:772px;width:1px;height:26px;background:#ececec"></div>
<div class="t" style="left:733px;width:38.5px;top:771.07px;height:27px;overflow:hidden"><div class="t" style="left:0;top:3px;font-size:20px;line-height:20px;color:#000;transform:scaleX(0.845);transform-origin:0 50%">грн</div></div>
<div class="a" style="left:828px;top:772px;width:1px;height:26px;background:#ececec"></div>
<div class="t" style="left:780px;width:45px;top:771.07px;height:27px;overflow:hidden"><div class="t" style="right:0;top:3px;font-size:20px;line-height:20px;color:#000;transform:scaleX(0.845);transform-origin:100% 50%">1</div></div>
<div class="a" style="left:930px;top:772px;width:1px;height:26px;background:#ececec"></div>
<div class="t" style="left:831px;width:96px;top:771.07px;height:27px;overflow:hidden"><div class="t" style="right:0;top:3px;font-size:20px;line-height:20px;color:#000;transform:scaleX(0.845);transform-origin:100% 50%">650,00</div></div>
<div class="a" style="left:1008px;top:772px;width:1px;height:26px;background:#ececec"></div>
<div class="t" style="left:933px;width:72px;top:771.07px;height:27px;overflow:hidden"><div class="t" style="right:0;top:3px;font-size:20px;line-height:20px;color:#000;transform:scaleX(0.845);transform-origin:100% 50%">53,85%</div></div>
<div class="a" style="left:1109px;top:772px;width:1px;height:26px;background:#ececec"></div>
<div class="t" style="left:1011px;width:95px;top:771.07px;height:27px;overflow:hidden"><div class="t" style="right:0;top:3px;font-size:20px;line-height:20px;color:#000;transform:scaleX(0.845);transform-origin:100% 50%">1 000,00</div></div>
<div class="a" style="left:1211px;top:772px;width:1px;height:26px;background:#ececec"></div>
<div class="t" style="left:1112px;width:96px;top:771.07px;height:27px;overflow:hidden"><div class="t" style="right:0;top:3px;font-size:20px;line-height:20px;color:#000;transform:scaleX(0.845);transform-origin:100% 50%">1 000,03</div></div>
<div class="a" style="left:1305px;top:772px;width:1px;height:26px;background:#ececec"></div>
<div class="t" style="left:1214px;width:88px;top:771.07px;height:27px;overflow:hidden"><div class="t" style="right:0;top:3px;font-size:20px;line-height:20px;color:#000;transform:scaleX(0.845);transform-origin:100% 50%">+0,03</div></div>
<div class="a" style="left:1354px;top:772px;width:1px;height:26px;background:#ececec"></div>
<div class="t" style="left:1308px;width:43px;top:771.07px;height:27px;overflow:hidden"><div class="t" style="right:0;top:3px;font-size:20px;line-height:20px;color:#000;transform:scaleX(0.845);transform-origin:100% 50%">0%</div></div>
<div class="a" style="left:1405px;top:772px;width:1px;height:26px;background:#ececec"></div>
<div class="t" style="left:1358.5px;width:42.5px;top:771.07px;height:27px;overflow:hidden"><div class="t" style="left:0;top:3px;font-size:20px;line-height:20px;color:#000;transform:scaleX(0.845);transform-origin:0 50%">650,00</div></div>
<div class="a" style="left:1483px;top:772px;width:1px;height:26px;background:#ececec"></div>
<div class="t" style="left:1408px;width:72px;top:771.07px;height:27px;overflow:hidden"><div class="t" style="right:0;top:3px;font-size:20px;line-height:20px;color:#000;transform:scaleX(0.845);transform-origin:100% 50%">650,00</div></div>
<div class="t" style="left:1486px;width:72px;top:771.07px;height:27px;overflow:hidden"><div class="t" style="right:0;top:3px;font-size:20px;line-height:20px;color:#000;transform:scaleX(0.845);transform-origin:100% 50%">1</div></div>
<div class="a" style="left:9px;top:798px;width:1552px;height:27px;background:#d3f5dd"></div>
<div class="a" style="left:9px;top:824px;width:1552px;height:1px;background:#ececec"></div>
<div class="a" style="left:415px;top:798px;width:1px;height:27px;background:#ececec"></div>
<div class="t" style="left:12.5px;width:398.5px;top:797.07px;height:27px;overflow:hidden"><div class="t" style="left:0;top:3px;font-size:20px;line-height:20px;color:#000;transform:scaleX(0.845);transform-origin:0 50%">Кеди Puma Shuffle 30966811 45(р) темно-синій</div></div>
<div class="a" style="left:496px;top:798px;width:1px;height:27px;background:#ececec"></div>
<div class="t" style="left:419.5px;width:72.5px;top:797.07px;height:27px;overflow:hidden"><div class="t" style="left:0;top:3px;font-size:20px;line-height:20px;color:#000;transform:scaleX(0.845);transform-origin:0 50%">30966811</div></div>
<div class="a" style="left:628px;top:798px;width:1px;height:27px;background:#ececec"></div>
<div class="t" style="left:500.5px;width:122.0px;top:797.07px;height:27px;overflow:hidden"><div class="t" style="left:0;top:3px;font-size:20px;line-height:20px;color:#000;transform:scaleX(0.845);transform-origin:0 50%">2940080000294</div></div>
<div class="a" style="left:730px;top:798px;width:1px;height:27px;background:#ececec"></div>
<div class="t" style="left:631px;width:96px;top:797.07px;height:27px;overflow:hidden"><div class="t" style="right:0;top:3px;font-size:20px;line-height:20px;color:#000;transform:scaleX(0.845);transform-origin:100% 50%">650,00</div></div>
<div class="a" style="left:777px;top:798px;width:1px;height:27px;background:#ececec"></div>
<div class="t" style="left:733px;width:38.5px;top:797.07px;height:27px;overflow:hidden"><div class="t" style="left:0;top:3px;font-size:20px;line-height:20px;color:#000;transform:scaleX(0.845);transform-origin:0 50%">грн</div></div>
<div class="a" style="left:828px;top:798px;width:1px;height:27px;background:#ececec"></div>
<div class="t" style="left:780px;width:45px;top:797.07px;height:27px;overflow:hidden"><div class="t" style="right:0;top:3px;font-size:20px;line-height:20px;color:#000;transform:scaleX(0.845);transform-origin:100% 50%">1</div></div>
<div class="a" style="left:930px;top:798px;width:1px;height:27px;background:#ececec"></div>
<div class="t" style="left:831px;width:96px;top:797.07px;height:27px;overflow:hidden"><div class="t" style="right:0;top:3px;font-size:20px;line-height:20px;color:#000;transform:scaleX(0.845);transform-origin:100% 50%">650,00</div></div>
<div class="a" style="left:1008px;top:798px;width:1px;height:27px;background:#ececec"></div>
<div class="t" style="left:933px;width:72px;top:797.07px;height:27px;overflow:hidden"><div class="t" style="right:0;top:3px;font-size:20px;line-height:20px;color:#000;transform:scaleX(0.845);transform-origin:100% 50%">53,85%</div></div>
<div class="a" style="left:1109px;top:798px;width:1px;height:27px;background:#ececec"></div>
<div class="t" style="left:1011px;width:95px;top:797.07px;height:27px;overflow:hidden"><div class="t" style="right:0;top:3px;font-size:20px;line-height:20px;color:#000;transform:scaleX(0.845);transform-origin:100% 50%">1 000,00</div></div>
<div class="a" style="left:1211px;top:798px;width:1px;height:27px;background:#ececec"></div>
<div class="t" style="left:1112px;width:96px;top:797.07px;height:27px;overflow:hidden"><div class="t" style="right:0;top:3px;font-size:20px;line-height:20px;color:#000;transform:scaleX(0.845);transform-origin:100% 50%">1 000,03</div></div>
<div class="a" style="left:1305px;top:798px;width:1px;height:27px;background:#ececec"></div>
<div class="t" style="left:1214px;width:88px;top:797.07px;height:27px;overflow:hidden"><div class="t" style="right:0;top:3px;font-size:20px;line-height:20px;color:#000;transform:scaleX(0.845);transform-origin:100% 50%">+0,03</div></div>
<div class="a" style="left:1354px;top:798px;width:1px;height:27px;background:#ececec"></div>
<div class="t" style="left:1308px;width:43px;top:797.07px;height:27px;overflow:hidden"><div class="t" style="right:0;top:3px;font-size:20px;line-height:20px;color:#000;transform:scaleX(0.845);transform-origin:100% 50%">0%</div></div>
<div class="a" style="left:1405px;top:798px;width:1px;height:27px;background:#ececec"></div>
<div class="t" style="left:1358.5px;width:42.5px;top:797.07px;height:27px;overflow:hidden"><div class="t" style="left:0;top:3px;font-size:20px;line-height:20px;color:#000;transform:scaleX(0.845);transform-origin:0 50%">650,00</div></div>
<div class="a" style="left:1483px;top:798px;width:1px;height:27px;background:#ececec"></div>
<div class="t" style="left:1408px;width:72px;top:797.07px;height:27px;overflow:hidden"><div class="t" style="right:0;top:3px;font-size:20px;line-height:20px;color:#000;transform:scaleX(0.845);transform-origin:100% 50%">650,00</div></div>
<div class="t" style="left:1486px;width:72px;top:797.07px;height:27px;overflow:hidden"><div class="t" style="right:0;top:3px;font-size:20px;line-height:20px;color:#000;transform:scaleX(0.845);transform-origin:100% 50%">0</div></div>
<div class="a" style="left:9px;top:825px;width:1552px;height:26px;background:#f8d9da"></div>
<div class="a" style="left:9px;top:850px;width:1552px;height:1px;background:#ececec"></div>
<div class="a" style="left:415px;top:825px;width:1px;height:26px;background:#ececec"></div>
<div class="t" style="left:12.5px;width:398.5px;top:824.07px;height:27px;overflow:hidden"><div class="t" style="left:0;top:3px;font-size:20px;line-height:20px;color:#000;transform:scaleX(0.845);transform-origin:0 50%">Кеди Puma зелений</div></div>
<div class="a" style="left:496px;top:825px;width:1px;height:26px;background:#ececec"></div>
<div class="a" style="left:628px;top:825px;width:1px;height:26px;background:#ececec"></div>
<div class="t" style="left:500.5px;width:122.0px;top:824.07px;height:27px;overflow:hidden"><div class="t" style="left:0;top:3px;font-size:20px;line-height:20px;color:#000;transform:scaleX(0.845);transform-origin:0 50%">2911200012565</div></div>
<div class="a" style="left:730px;top:825px;width:1px;height:26px;background:#ececec"></div>
<div class="t" style="left:631px;width:96px;top:824.07px;height:27px;overflow:hidden"><div class="t" style="right:0;top:3px;font-size:20px;line-height:20px;color:#000;transform:scaleX(0.845);transform-origin:100% 50%">0,00</div></div>
<div class="a" style="left:777px;top:825px;width:1px;height:26px;background:#ececec"></div>
<div class="t" style="left:733px;width:38.5px;top:824.07px;height:27px;overflow:hidden"><div class="t" style="left:0;top:3px;font-size:20px;line-height:20px;color:#000;transform:scaleX(0.845);transform-origin:0 50%">грн</div></div>
<div class="a" style="left:828px;top:825px;width:1px;height:26px;background:#ececec"></div>
<div class="t" style="left:780px;width:45px;top:824.07px;height:27px;overflow:hidden"><div class="t" style="right:0;top:3px;font-size:20px;line-height:20px;color:#000;transform:scaleX(0.845);transform-origin:100% 50%">1</div></div>
<div class="a" style="left:930px;top:825px;width:1px;height:26px;background:#ececec"></div>
<div class="t" style="left:831px;width:96px;top:824.07px;height:27px;overflow:hidden"><div class="t" style="right:0;top:3px;font-size:20px;line-height:20px;color:#000;transform:scaleX(0.845);transform-origin:100% 50%">0,00</div></div>
<div class="a" style="left:1008px;top:825px;width:1px;height:26px;background:#ececec"></div>
<div class="t" style="left:933px;width:72px;top:824.07px;height:27px;overflow:hidden"><div class="t" style="right:0;top:3px;font-size:20px;line-height:20px;color:#000;transform:scaleX(0.845);transform-origin:100% 50%">63,27%</div></div>
<div class="a" style="left:1109px;top:825px;width:1px;height:26px;background:#ececec"></div>
<div class="t" style="left:1011px;width:95px;top:824.07px;height:27px;overflow:hidden"><div class="t" style="right:0;top:3px;font-size:20px;line-height:20px;color:#000;transform:scaleX(0.845);transform-origin:100% 50%">734,72</div></div>
<div class="a" style="left:1211px;top:825px;width:1px;height:26px;background:#ececec"></div>
<div class="t" style="left:1112px;width:96px;top:824.07px;height:27px;overflow:hidden"><div class="t" style="right:0;top:3px;font-size:20px;line-height:20px;color:#000;transform:scaleX(0.845);transform-origin:100% 50%">0,00</div></div>
<div class="a" style="left:1305px;top:825px;width:1px;height:26px;background:#ececec"></div>
<div class="t" style="left:1214px;width:88px;top:824.07px;height:27px;overflow:hidden"><div class="t" style="right:0;top:3px;font-size:20px;line-height:20px;color:#000;transform:scaleX(0.845);transform-origin:100% 50%">-734,72</div></div>
<div class="a" style="left:1354px;top:825px;width:1px;height:26px;background:#ececec"></div>
<div class="t" style="left:1309.5px;width:40.5px;top:824.07px;height:27px;overflow:hidden"><div class="t" style="left:0;top:3px;font-size:20px;line-height:20px;color:#000;transform:scaleX(0.845);transform-origin:0 50%">-4,76%</div></div>
<div class="a" style="left:1405px;top:825px;width:1px;height:26px;background:#ececec"></div>
<div class="t" style="left:1358.5px;width:42.5px;top:824.07px;height:27px;overflow:hidden"><div class="t" style="left:0;top:3px;font-size:20px;line-height:20px;color:#000;transform:scaleX(0.845);transform-origin:0 50%">428,57</div></div>
<div class="a" style="left:1483px;top:825px;width:1px;height:26px;background:#ececec"></div>
<div class="t" style="left:1408px;width:72px;top:824.07px;height:27px;overflow:hidden"><div class="t" style="right:0;top:3px;font-size:20px;line-height:20px;color:#000;transform:scaleX(0.845);transform-origin:100% 50%">0,00</div></div>
<div class="t" style="left:1486px;width:72px;top:824.07px;height:27px;overflow:hidden"><div class="t" style="right:0;top:3px;font-size:20px;line-height:20px;color:#000;transform:scaleX(0.845);transform-origin:100% 50%">0</div></div>
<div class="a" style="left:9px;top:851px;width:1552px;height:27px;background:#ffffff"></div>
<div class="a" style="left:9px;top:877px;width:1552px;height:1px;background:#ebebeb"></div>
<div class="a" style="left:415px;top:851px;width:1px;height:27px;background:#ebebeb"></div>
<div class="t" style="left:12.5px;width:398.5px;top:850.07px;height:27px;overflow:hidden"><div class="t" style="left:0;top:3px;font-size:20px;line-height:20px;color:#000;transform:scaleX(0.845);transform-origin:0 50%">Клатч TEREA з метеликом чорний</div></div>
<div class="a" style="left:496px;top:851px;width:1px;height:27px;background:#ebebeb"></div>
<div class="a" style="left:628px;top:851px;width:1px;height:27px;background:#ebebeb"></div>
<div class="t" style="left:500.5px;width:122.0px;top:850.07px;height:27px;overflow:hidden"><div class="t" style="left:0;top:3px;font-size:20px;line-height:20px;color:#000;transform:scaleX(0.845);transform-origin:0 50%">2911200013708</div></div>
<div class="a" style="left:730px;top:851px;width:1px;height:27px;background:#ebebeb"></div>
<div class="t" style="left:631px;width:96px;top:850.07px;height:27px;overflow:hidden"><div class="t" style="right:0;top:3px;font-size:20px;line-height:20px;color:#000;transform:scaleX(0.845);transform-origin:100% 50%">800,00</div></div>
<div class="a" style="left:777px;top:851px;width:1px;height:27px;background:#ebebeb"></div>
<div class="t" style="left:733px;width:38.5px;top:850.07px;height:27px;overflow:hidden"><div class="t" style="left:0;top:3px;font-size:20px;line-height:20px;color:#000;transform:scaleX(0.845);transform-origin:0 50%">грн</div></div>
<div class="a" style="left:828px;top:851px;width:1px;height:27px;background:#ebebeb"></div>
<div class="t" style="left:780px;width:45px;top:850.07px;height:27px;overflow:hidden"><div class="t" style="right:0;top:3px;font-size:20px;line-height:20px;color:#000;transform:scaleX(0.845);transform-origin:100% 50%">1</div></div>
<div class="a" style="left:930px;top:851px;width:1px;height:27px;background:#ebebeb"></div>
<div class="t" style="left:831px;width:96px;top:850.07px;height:27px;overflow:hidden"><div class="t" style="right:0;top:3px;font-size:20px;line-height:20px;color:#000;transform:scaleX(0.845);transform-origin:100% 50%">800,00</div></div>
<div class="a" style="left:1008px;top:851px;width:1px;height:27px;background:#ebebeb"></div>
<div class="t" style="left:933px;width:72px;top:850.07px;height:27px;overflow:hidden"><div class="t" style="right:0;top:3px;font-size:20px;line-height:20px;color:#000;transform:scaleX(0.845);transform-origin:100% 50%">55%</div></div>
<div class="a" style="left:1109px;top:851px;width:1px;height:27px;background:#ebebeb"></div>
<div class="t" style="left:1011px;width:95px;top:850.07px;height:27px;overflow:hidden"><div class="t" style="right:0;top:3px;font-size:20px;line-height:20px;color:#000;transform:scaleX(0.845);transform-origin:100% 50%">1 240,00</div></div>
<div class="a" style="left:1211px;top:851px;width:1px;height:27px;background:#ebebeb"></div>
<div class="t" style="left:1112px;width:96px;top:850.07px;height:27px;overflow:hidden"><div class="t" style="right:0;top:3px;font-size:20px;line-height:20px;color:#000;transform:scaleX(0.845);transform-origin:100% 50%">1 240,00</div></div>
<div class="a" style="left:1305px;top:851px;width:1px;height:27px;background:#ebebeb"></div>
<div class="t" style="left:1214px;width:88px;top:850.07px;height:27px;overflow:hidden"><div class="t" style="right:0;top:3px;font-size:20px;line-height:20px;color:#000;transform:scaleX(0.845);transform-origin:100% 50%">0,00</div></div>
<div class="a" style="left:1354px;top:851px;width:1px;height:27px;background:#ebebeb"></div>
<div class="t" style="left:1309.5px;width:40.5px;top:850.07px;height:27px;overflow:hidden"><div class="t" style="left:0;top:3px;font-size:20px;line-height:20px;color:#000;transform:scaleX(0.845);transform-origin:0 50%">-100%</div></div>
<div class="a" style="left:1405px;top:851px;width:1px;height:27px;background:#ebebeb"></div>
<div class="t" style="left:1357px;width:45px;top:850.07px;height:27px;overflow:hidden"><div class="t" style="right:0;top:3px;font-size:20px;line-height:20px;color:#000;transform:scaleX(0.845);transform-origin:100% 50%">0,00</div></div>
<div class="a" style="left:1483px;top:851px;width:1px;height:27px;background:#ebebeb"></div>
<div class="t" style="left:1408px;width:72px;top:850.07px;height:27px;overflow:hidden"><div class="t" style="right:0;top:3px;font-size:20px;line-height:20px;color:#000;transform:scaleX(0.845);transform-origin:100% 50%">0,00</div></div>
<div class="t" style="left:1486px;width:72px;top:850.07px;height:27px;overflow:hidden"><div class="t" style="right:0;top:3px;font-size:20px;line-height:20px;color:#000;transform:scaleX(0.845);transform-origin:100% 50%">10</div></div>
<div class="a" style="left:9px;top:878px;width:1552px;height:27px;background:#d3f5dd"></div>
<div class="a" style="left:9px;top:904px;width:1552px;height:1px;background:#ececec"></div>
<div class="a" style="left:415px;top:878px;width:1px;height:27px;background:#ececec"></div>
<div class="t" style="left:12.5px;width:398.5px;top:877.07px;height:27px;overflow:hidden"><div class="t" style="left:0;top:3px;font-size:20px;line-height:20px;color:#000;transform:scaleX(0.845);transform-origin:0 50%">Колготки LC WAIKIKI 40den L(р) бронза</div></div>
<div class="a" style="left:496px;top:878px;width:1px;height:27px;background:#ececec"></div>
<div class="a" style="left:628px;top:878px;width:1px;height:27px;background:#ececec"></div>
<div class="t" style="left:500.5px;width:122.0px;top:877.07px;height:27px;overflow:hidden"><div class="t" style="left:0;top:3px;font-size:20px;line-height:20px;color:#000;transform:scaleX(0.845);transform-origin:0 50%">2911200013463</div></div>
<div class="a" style="left:730px;top:878px;width:1px;height:27px;background:#ececec"></div>
<div class="t" style="left:631px;width:96px;top:877.07px;height:27px;overflow:hidden"><div class="t" style="right:0;top:3px;font-size:20px;line-height:20px;color:#000;transform:scaleX(0.845);transform-origin:100% 50%">150,00</div></div>
<div class="a" style="left:777px;top:878px;width:1px;height:27px;background:#ececec"></div>
<div class="t" style="left:733px;width:38.5px;top:877.07px;height:27px;overflow:hidden"><div class="t" style="left:0;top:3px;font-size:20px;line-height:20px;color:#000;transform:scaleX(0.845);transform-origin:0 50%">грн</div></div>
<div class="a" style="left:828px;top:878px;width:1px;height:27px;background:#ececec"></div>
<div class="t" style="left:780px;width:45px;top:877.07px;height:27px;overflow:hidden"><div class="t" style="right:0;top:3px;font-size:20px;line-height:20px;color:#000;transform:scaleX(0.845);transform-origin:100% 50%">1</div></div>
<div class="a" style="left:930px;top:878px;width:1px;height:27px;background:#ececec"></div>
<div class="t" style="left:831px;width:96px;top:877.07px;height:27px;overflow:hidden"><div class="t" style="right:0;top:3px;font-size:20px;line-height:20px;color:#000;transform:scaleX(0.845);transform-origin:100% 50%">150,00</div></div>
<div class="a" style="left:1008px;top:878px;width:1px;height:27px;background:#ececec"></div>
<div class="t" style="left:933px;width:72px;top:877.07px;height:27px;overflow:hidden"><div class="t" style="right:0;top:3px;font-size:20px;line-height:20px;color:#000;transform:scaleX(0.845);transform-origin:100% 50%">66,67%</div></div>
<div class="a" style="left:1109px;top:878px;width:1px;height:27px;background:#ececec"></div>
<div class="t" style="left:1011px;width:95px;top:877.07px;height:27px;overflow:hidden"><div class="t" style="right:0;top:3px;font-size:20px;line-height:20px;color:#000;transform:scaleX(0.845);transform-origin:100% 50%">250,00</div></div>
<div class="a" style="left:1211px;top:878px;width:1px;height:27px;background:#ececec"></div>
<div class="t" style="left:1112px;width:96px;top:877.07px;height:27px;overflow:hidden"><div class="t" style="right:0;top:3px;font-size:20px;line-height:20px;color:#000;transform:scaleX(0.845);transform-origin:100% 50%">250,01</div></div>
<div class="a" style="left:1305px;top:878px;width:1px;height:27px;background:#ececec"></div>
<div class="t" style="left:1214px;width:88px;top:877.07px;height:27px;overflow:hidden"><div class="t" style="right:0;top:3px;font-size:20px;line-height:20px;color:#000;transform:scaleX(0.845);transform-origin:100% 50%">+0,01</div></div>
<div class="a" style="left:1354px;top:878px;width:1px;height:27px;background:#ececec"></div>
<div class="t" style="left:1308px;width:43px;top:877.07px;height:27px;overflow:hidden"><div class="t" style="right:0;top:3px;font-size:20px;line-height:20px;color:#000;transform:scaleX(0.845);transform-origin:100% 50%">500%</div></div>
<div class="a" style="left:1405px;top:878px;width:1px;height:27px;background:#ececec"></div>
<div class="t" style="left:1358.5px;width:42.5px;top:877.07px;height:27px;overflow:hidden"><div class="t" style="left:0;top:3px;font-size:20px;line-height:20px;color:#000;transform:scaleX(0.845);transform-origin:0 50%">900,00</div></div>
<div class="a" style="left:1483px;top:878px;width:1px;height:27px;background:#ececec"></div>
<div class="t" style="left:1408px;width:72px;top:877.07px;height:27px;overflow:hidden"><div class="t" style="right:0;top:3px;font-size:20px;line-height:20px;color:#000;transform:scaleX(0.845);transform-origin:100% 50%">900,00</div></div>
<div class="t" style="left:1486px;width:72px;top:877.07px;height:27px;overflow:hidden"><div class="t" style="right:0;top:3px;font-size:20px;line-height:20px;color:#000;transform:scaleX(0.845);transform-origin:100% 50%">5</div></div>
<div class="a" style="left:9px;top:905px;width:1552px;height:2px;background:#ffffff"></div>
<div class="a" style="left:9px;top:907px;width:1552px;height:1px;background:#a0a0a0"></div>
<div class="a" style="left:1561px;top:907px;width:1px;height:35px;background:#a0a0a0"></div>
<div class="a" style="left:8px;top:941px;width:1554px;height:1px;background:#a0a0a0"></div>
<div class="a" style="left:13px;top:911.5px;width:401px;height:27px;border-top:1px solid #a0a0a0;border-left:1px solid #a0a0a0;border-right:1px solid #fff;border-bottom:1px solid #fff"></div>
<div class="t" style="left:18px;width:382px;top:911.47px;height:27px;overflow:hidden"><div class="t" style="left:0;top:3px;font-size:20px;line-height:20px;color:#000;transform:scaleX(0.845);transform-origin:0 50%">Всего 318 товаров</div></div>
<div class="a" style="left:1213.5px;top:911.5px;width:90px;height:27px;border-top:1px solid #a0a0a0;border-left:1px solid #a0a0a0;border-right:1px solid #fff;border-bottom:1px solid #fff"></div>
<div class="t" style="left:1215px;width:86px;top:911.47px;height:27px;overflow:hidden"><div class="t" style="right:0;top:3px;font-size:20px;line-height:20px;color:#000;transform:scaleX(0.845);transform-origin:100% 50%">-36 143,80</div></div>
<div class="a" style="left:1485.5px;top:911.5px;width:72px;height:27px;border-top:1px solid #a0a0a0;border-left:1px solid #a0a0a0;border-right:1px solid #fff;border-bottom:1px solid #fff"></div>
<div class="t" style="left:1487px;width:67px;top:911.47px;height:27px;overflow:hidden"><div class="t" style="right:0;top:3px;font-size:20px;line-height:20px;color:#000;transform:scaleX(0.845);transform-origin:100% 50%">5100,02</div></div>
<div class="a" style="left:1562px;top:356px;width:28px;height:588px;background:#ffffff"></div>
<svg style="left:0;top:0" width="1" height="1"><polyline points="1569.5,371.5 1575.5,365.8 1581.5,371.5" fill="none" stroke="#606060" stroke-width="2"/><polyline points="1569.5,927 1575.5,932.6 1581.5,927" fill="none" stroke="#606060" stroke-width="2"/></svg>
<div class="a" style="left:1564px;top:517.7px;width:23.5px;height:27.5px;background:#c2c2c2;border-radius:4px"></div>
<div class="a" style="left:1599px;top:0px;width:1px;height:952px;background:#8a8a8a"></div>
<div class="a" style="left:0px;top:0px;width:2px;height:952px;background:#dcdcdc"></div>
</body></html>
